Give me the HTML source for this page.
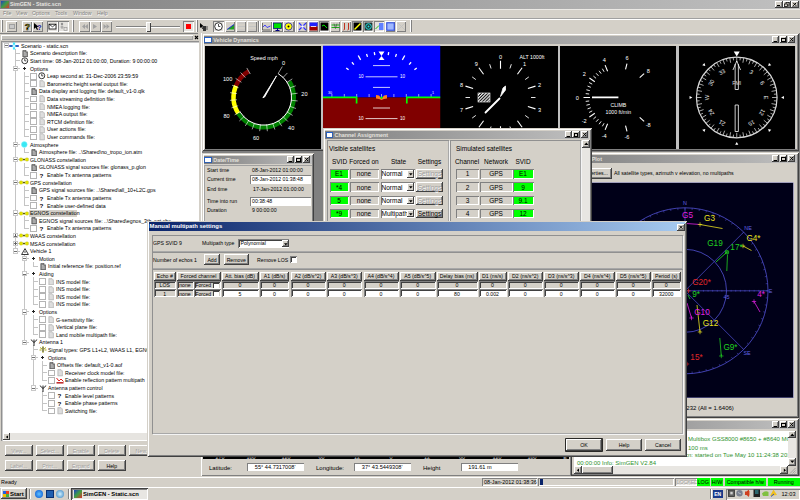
<!DOCTYPE html><html><head><meta charset="utf-8"><style>
html,body{margin:0;padding:0;width:800px;height:500px;overflow:hidden;background:#D4D0C8;}
body{position:relative;font-family:"Liberation Sans", sans-serif;}
div,span,svg{position:absolute;box-sizing:border-box;}
span{white-space:nowrap;line-height:1;}
</style></head><body>
<div style="left:0px;top:0px;width:800px;height:8.7px;background:linear-gradient(90deg,#808080,#C0C0C0)"></div>
<div style="left:1px;top:0.8px;width:7.5px;height:7.2px;background:linear-gradient(135deg,#2040c0,#40a040 50%,#e03030)"></div>
<span style="left:10px;top:2.49px;font-size:5.3px;color:#e6e4e0;font-weight:700;">SimGEN - Static.scn</span>
<div style="left:775px;top:1px;width:7.5px;height:6.8px;background:#D4D0C8;box-shadow:inset -1px -1px #404040,inset 1px 1px #fff,inset -2px -2px #808080;"></div>
<div style="left:783px;top:1px;width:7.5px;height:6.8px;background:#D4D0C8;box-shadow:inset -1px -1px #404040,inset 1px 1px #fff,inset -2px -2px #808080;"></div>
<div style="left:791px;top:1px;width:7.5px;height:6.8px;background:#D4D0C8;box-shadow:inset -1px -1px #404040,inset 1px 1px #fff,inset -2px -2px #808080;"></div>
<div style="left:777px;top:5.2px;width:3px;height:1px;background:#000"></div>
<svg style="position:absolute;left:783px;top:1px;" width="7.5" height="6.8" viewBox="0 0 7.5 6.8"><rect x="3" y="1.6" width="3" height="2.6" fill="none" stroke="#000" stroke-width="0.7"/><rect x="1.6" y="3" width="3" height="2.4" fill="#d4d0c8" stroke="#000" stroke-width="0.7"/></svg>
<svg style="position:absolute;left:791px;top:1px;" width="7.5" height="6.8" viewBox="0 0 7.5 6.8"><path d="M2.2 1.8L5.2 4.8M5.2 1.8L2.2 4.8" stroke="#000" stroke-width="1"/></svg>
<span style="left:3px;top:11.32px;font-size:5.2px;color:#808080;font-weight:400;text-shadow:0.5px 0.5px #fff">File</span>
<span style="left:16px;top:11.32px;font-size:5.2px;color:#808080;font-weight:400;text-shadow:0.5px 0.5px #fff">View</span>
<span style="left:32px;top:11.32px;font-size:5.2px;color:#808080;font-weight:400;text-shadow:0.5px 0.5px #fff">Options</span>
<span style="left:55px;top:11.32px;font-size:5.2px;color:#808080;font-weight:400;text-shadow:0.5px 0.5px #fff">Tools</span>
<span style="left:73px;top:11.32px;font-size:5.2px;color:#808080;font-weight:400;text-shadow:0.5px 0.5px #fff">Window</span>
<span style="left:97px;top:11.32px;font-size:5.2px;color:#808080;font-weight:400;text-shadow:0.5px 0.5px #fff">Help</span>
<div style="left:0px;top:8.7px;width:800px;height:1px;background:#ebe9e5"></div>
<div style="left:0px;top:33px;width:200px;height:1px;background:#808080"></div>
<div style="left:0px;top:18px;width:800px;height:1px;background:#a0a0a0"></div>
<div style="left:0px;top:19px;width:800px;height:1px;background:#fff"></div>
<div style="left:0px;top:33px;width:800px;height:1px;background:#808080"></div>
<div style="left:0px;top:34px;width:800px;height:1px;background:#fff"></div>
<div style="left:1px;top:20px;width:1px;height:12px;background:#fff"></div>
<div style="left:2px;top:20px;width:1px;height:12px;background:#808080"></div>
<div style="left:72px;top:20px;width:1px;height:12px;background:#fff"></div>
<div style="left:73px;top:20px;width:1px;height:12px;background:#808080"></div>
<div style="left:196px;top:20px;width:1px;height:12px;background:#fff"></div>
<div style="left:197px;top:20px;width:1px;height:12px;background:#808080"></div>
<div style="left:410px;top:20px;width:1px;height:12px;background:#fff"></div>
<div style="left:411px;top:20px;width:1px;height:12px;background:#808080"></div>
<div style="left:6px;top:21px;width:10.5px;height:10.5px;box-shadow:inset 1px 1px #fff,inset -1px -1px #808080"></div>
<div style="left:8.5px;top:23.5px;width:6px;height:5px;background:#c8c8c8;border:0.6px solid #a0a0a0"></div>
<div style="left:21.5px;top:21px;width:10.5px;height:10.5px;box-shadow:inset 1px 1px #fff,inset -1px -1px #808080"></div>
<svg style="position:absolute;left:21.5px;top:21px;" width="11" height="11" viewBox="0 0 11 11"><text x="5.5" y="8.8" font-size="9" font-weight="700" text-anchor="middle" fill="#c8b800" stroke="#000" stroke-width="0.5" font-family="Liberation Sans">?</text></svg>
<div style="left:32px;top:21px;width:10.5px;height:10.5px;box-shadow:inset 1px 1px #fff,inset -1px -1px #808080"></div>
<svg style="position:absolute;left:33px;top:22px;" width="9" height="9" viewBox="0 0 9 9"><path d="M1 1L1 7L2.6 5.6L4 8L5 7.5L3.8 5.1L6 5Z" fill="#000"/></svg>
<span style="left:37.2px;top:23.64px;font-size:7px;color:#1010a0;font-weight:700;">?</span>
<div style="left:47px;top:21px;width:10.5px;height:10.5px;background:#e4e2de;box-shadow:inset 1px 1px #808080,inset -1px -1px #fff"></div>
<svg style="position:absolute;left:47px;top:21px;" width="11" height="11" viewBox="0 0 11 11"><rect x="2" y="3.2" width="7" height="4.8" fill="#fff" stroke="#000" stroke-width="0.8"/><path d="M2 3.2L5.5 5.8L9 3.2" stroke="#000" stroke-width="0.7" fill="none"/></svg>
<div style="left:58px;top:21px;width:10.5px;height:10.5px;background:#e4e2de;box-shadow:inset 1px 1px #808080,inset -1px -1px #fff"></div>
<svg style="position:absolute;left:58px;top:21px;" width="11" height="11" viewBox="0 0 11 11"><circle cx="4" cy="3" r="1.2" fill="#909090"/><path d="M4 4.5V8M2.5 6H5.5" stroke="#909090" stroke-width="0.8"/><rect x="6" y="6.5" width="3" height="3" fill="none" stroke="#909090" stroke-width="0.6"/></svg>
<div style="left:79px;top:21px;width:10.5px;height:10.5px;box-shadow:inset 1px 1px #fff,inset -1px -1px #808080"></div>
<div style="left:90px;top:21px;width:10.5px;height:10.5px;box-shadow:inset 1px 1px #fff,inset -1px -1px #808080"></div>
<div style="left:101px;top:21px;width:10.5px;height:10.5px;box-shadow:inset 1px 1px #fff,inset -1px -1px #808080"></div>
<svg style="position:absolute;left:79px;top:21px;" width="33" height="11" viewBox="0 0 33 11"><path d="M6 3L3 5.5L6 8ZM9 3L6 5.5L9 8Z" fill="#a0a0a0"/><path d="M14 3V8L18 5.5Z" fill="#a0a0a0"/><path d="M24.5 3L27.5 5.5L24.5 8ZM27.5 3L30.5 5.5L27.5 8Z" fill="#a0a0a0"/></svg>
<div style="left:115.5px;top:25.5px;width:64px;height:1px;background:#808080"></div>
<div style="left:115.5px;top:26.5px;width:64px;height:1px;background:#fff"></div>
<div style="left:146px;top:22px;width:4.5px;height:9.5px;background:#e8e6e2;box-shadow:inset 1px 1px #fff,inset -1px -1px #404040"></div>
<div style="left:183px;top:21px;width:10.5px;height:10.5px;background:#e4e2de;box-shadow:inset 1px 1px #808080,inset -1px -1px #fff"></div>
<div style="left:186px;top:23.8px;width:5px;height:4.8px;background:#ff0000"></div>
<div style="left:200px;top:22px;width:7px;height:9px;"></div>
<svg style="position:absolute;left:199px;top:22px;" width="10" height="10" viewBox="0 0 10 10"><path d="M1 1L1 6L2.3 5L3.3 7L4 6.7L3.1 4.6L5 4.5Z" fill="#000"/><rect x="4" y="4" width="3" height="5" fill="#333"/><path d="M7 5H9M7 7H9" stroke="#333" stroke-width="0.8"/></svg>
<div style="left:213px;top:21px;width:10.5px;height:10.5px;background:#e4e2de;box-shadow:inset 1px 1px #808080,inset -1px -1px #fff"></div>
<svg style="position:absolute;left:213px;top:21px;" width="11" height="11" viewBox="0 0 11 11"><circle cx="5.5" cy="5.5" r="3.8" fill="#fff" stroke="#000" stroke-width="0.8"/><path d="M5.5 3V5.5H7.3" stroke="#000" stroke-width="0.7" fill="none"/></svg>
<div style="left:224.5px;top:21px;width:10.5px;height:10.5px;box-shadow:inset 1px 1px #fff,inset -1px -1px #808080"></div>
<svg style="position:absolute;left:224.5px;top:21px;" width="11" height="11" viewBox="0 0 11 11"><path d="M2 8.5L9 3.5V8.5Z" fill="#20a020"/><path d="M2 8.5L9 3.5" stroke="#2020e0" stroke-width="0.9"/></svg>
<div style="left:235.5px;top:21px;width:10.5px;height:10.5px;box-shadow:inset 1px 1px #fff,inset -1px -1px #808080"></div>
<svg style="position:absolute;left:235.5px;top:21px;" width="11" height="11" viewBox="0 0 11 11"><path d="M2 2H9M2 5.5H9M2 9H9" stroke="#c0c0c0" stroke-width="0.8"/></svg>
<div style="left:246.5px;top:21px;width:10.5px;height:10.5px;box-shadow:inset 1px 1px #fff,inset -1px -1px #808080"></div>
<svg style="position:absolute;left:246.5px;top:21px;" width="11" height="11" viewBox="0 0 11 11"><path d="M2 2H9M2 5.5H9M2 9H9" stroke="#c0c0c0" stroke-width="0.8"/></svg>
<div style="left:257.5px;top:21px;width:1px;height:11px;background:#808080"></div>
<div style="left:258.5px;top:21px;width:1px;height:11px;background:#fff"></div>
<div style="left:261px;top:21px;width:10.5px;height:10.5px;box-shadow:inset 1px 1px #fff,inset -1px -1px #808080"></div>
<svg style="position:absolute;left:261px;top:21px;" width="11" height="11" viewBox="0 0 11 11"><path d="M1.5 2V9H9.5" stroke="#404040" stroke-width="0.7" fill="none"/><path d="M2 6L4 4L6 6.5L9.5 5" stroke="#2020ff" stroke-width="0.8" fill="none"/></svg>
<div style="left:272px;top:21px;width:10.5px;height:10.5px;box-shadow:inset 1px 1px #fff,inset -1px -1px #808080"></div>
<svg style="position:absolute;left:272px;top:21px;" width="11" height="11" viewBox="0 0 11 11"><rect x="1.5" y="2" width="8" height="5.5" fill="#00e000" stroke="#000080" stroke-width="0.7"/><path d="M3.5 9.5H7.5M5.5 7.5V9.5" stroke="#000080" stroke-width="1"/></svg>
<div style="left:283px;top:21px;width:10.5px;height:10.5px;box-shadow:inset 1px 1px #fff,inset -1px -1px #808080"></div>
<svg style="position:absolute;left:283px;top:21px;" width="11" height="11" viewBox="0 0 11 11"><circle cx="5.5" cy="5.5" r="3.6" fill="#ffff00" stroke="#0000c0" stroke-width="0.7"/><circle cx="5.5" cy="5.5" r="1" fill="#000"/></svg>
<div style="left:294px;top:21px;width:1px;height:11px;background:#808080"></div>
<div style="left:295px;top:21px;width:1px;height:11px;background:#fff"></div>
<div style="left:296.5px;top:21px;width:10.5px;height:10.5px;box-shadow:inset 1px 1px #fff,inset -1px -1px #808080"></div>
<svg style="position:absolute;left:296.5px;top:21px;" width="11" height="11" viewBox="0 0 11 11"><path d="M2 2L9 9M9 2L2 9" stroke="#3030ff" stroke-width="1.1"/><circle cx="5.5" cy="5.5" r="1.3" fill="#fff"/></svg>
<div style="left:307.5px;top:21px;width:10.5px;height:10.5px;box-shadow:inset 1px 1px #fff,inset -1px -1px #808080"></div>
<svg style="position:absolute;left:307.5px;top:21px;" width="11" height="11" viewBox="0 0 11 11"><rect x="1.5" y="1.5" width="8" height="4" fill="#2020ff"/><rect x="1.5" y="5.5" width="8" height="4" fill="#a00000"/><path d="M3 5.5H8" stroke="#fff" stroke-width="0.8"/></svg>
<div style="left:318.5px;top:21px;width:10.5px;height:10.5px;background:#e4e2de;box-shadow:inset 1px 1px #808080,inset -1px -1px #fff"></div>
<svg style="position:absolute;left:318.5px;top:21px;" width="11" height="11" viewBox="0 0 11 11"><rect x="1.5" y="1.5" width="8" height="8" fill="#000"/><path d="M3 5L5 4L8 7" stroke="#00ff00" stroke-width="0.9" fill="none"/></svg>
<div style="left:329.5px;top:21px;width:10.5px;height:10.5px;box-shadow:inset 1px 1px #fff,inset -1px -1px #808080"></div>
<svg style="position:absolute;left:329.5px;top:21px;" width="11" height="11" viewBox="0 0 11 11"><path d="M1.5 4H9.5M1.5 6.5H9.5" stroke="#00b000" stroke-width="0.9"/><path d="M4 2.5L5.5 7.5L7 2.5" stroke="#404040" stroke-width="0.6" fill="none"/></svg>
<div style="left:340.5px;top:21px;width:10.5px;height:10.5px;box-shadow:inset 1px 1px #fff,inset -1px -1px #808080"></div>
<svg style="position:absolute;left:340.5px;top:21px;" width="11" height="11" viewBox="0 0 11 11"><path d="M3.5 2V8.5L2.5 9M7.5 2V8.5L6.5 9" stroke="#c03020" stroke-width="1" fill="none"/></svg>
<div style="left:351.5px;top:21px;width:10.5px;height:10.5px;background:#e4e2de;box-shadow:inset 1px 1px #808080,inset -1px -1px #fff"></div>
<svg style="position:absolute;left:351.5px;top:21px;" width="11" height="11" viewBox="0 0 11 11"><rect x="1.5" y="1.5" width="8" height="8" fill="#000"/><path d="M2.5 8.5L8.5 2.5" stroke="#ffff00" stroke-width="1.5"/></svg>
<div style="left:362.5px;top:21px;width:10.5px;height:10.5px;background:#e4e2de;box-shadow:inset 1px 1px #808080,inset -1px -1px #fff"></div>
<svg style="position:absolute;left:362.5px;top:21px;" width="11" height="11" viewBox="0 0 11 11"><rect x="1.5" y="1.5" width="8" height="8" fill="#203030"/><circle cx="5.5" cy="5.5" r="2.8" fill="none" stroke="#20e0e0" stroke-width="1"/><circle cx="5.5" cy="5.5" r="1" fill="#20e0e0"/></svg>
<div style="left:373.5px;top:21px;width:10.5px;height:10.5px;background:#e4e2de;box-shadow:inset 1px 1px #808080,inset -1px -1px #fff"></div>
<svg style="position:absolute;left:373.5px;top:21px;" width="11" height="11" viewBox="0 0 11 11"><rect x="5" y="2" width="4.5" height="7" fill="#6080ff"/><path d="M1.5 8L5 4.5" stroke="#20c020" stroke-width="1"/></svg>
<div style="left:384.5px;top:21px;width:10.5px;height:10.5px;box-shadow:inset 1px 1px #fff,inset -1px -1px #808080"></div>
<svg style="position:absolute;left:384.5px;top:21px;" width="11" height="11" viewBox="0 0 11 11"><rect x="1.8" y="1.8" width="7.4" height="7.4" fill="#a0b8ff" stroke="#2040e0" stroke-width="1"/></svg>
<div style="left:395.5px;top:21px;width:10.5px;height:10.5px;box-shadow:inset 1px 1px #fff,inset -1px -1px #808080"></div>
<svg style="position:absolute;left:395.5px;top:21px;" width="11" height="11" viewBox="0 0 11 11"><path d="M2 2L9 9M9 2L2 9" stroke="#c0c0c0" stroke-width="0.8"/></svg>
<div style="left:200px;top:33px;width:600px;height:444px;background:#808080"></div>
<div style="left:198px;top:33px;width:4px;height:444px;background:#D4D0C8"></div>
<div style="left:200.5px;top:33px;width:1px;height:444px;background:#fff"></div>
<div style="left:202px;top:33px;width:597px;height:118px;background:#D4D0C8;box-shadow:inset 1px 1px #D4D0C8,inset -1px -1px #404040,inset 2px 2px #fff,inset -2px -2px #808080"></div>
<div style="left:204px;top:35.5px;width:592.5px;height:8.5px;background:linear-gradient(90deg,#808080,#C0C0C0)"></div>
<div style="left:204.3px;top:36.5px;width:7.6px;height:6.5px;background:#fff;border:0.7px solid #3060b0;border-top:1.3px solid #2060d0;box-sizing:border-box"></div>
<span style="left:213.3px;top:37.70px;font-size:5.4px;color:#e4e2de;font-weight:700;">Vehicle Dynamics</span>
<div style="left:771.9px;top:36.1px;width:7.4px;height:7.3px;background:#D4D0C8;box-shadow:inset -1px -1px #404040,inset 1px 1px #fff,inset -2px -2px #808080;"></div>
<div style="left:773.9px;top:40.6px;width:3px;height:1px;background:#000"></div>
<div style="left:779.6px;top:36.1px;width:7.4px;height:7.3px;background:#D4D0C8;box-shadow:inset -1px -1px #404040,inset 1px 1px #fff,inset -2px -2px #808080;"></div>
<div style="left:781.4px;top:37.5px;width:4.2px;height:4.3px;border:0.8px solid #000;border-top-width:1.4px;box-sizing:border-box"></div>
<div style="left:787.9px;top:36.1px;width:7.4px;height:7.3px;background:#D4D0C8;box-shadow:inset -1px -1px #404040,inset 1px 1px #fff,inset -2px -2px #808080;"></div>
<svg style="position:absolute;left:787.9px;top:36.1px;" width="7.7" height="7.3" viewBox="0 0 7.7 7.3"><path d="M2.2 1.8L5.1 5.1M5.1 1.8L2.2 5.1" stroke="#000" stroke-width="1"/></svg>
<div style="left:205px;top:45.5px;width:591px;height:103px;background:#c0c0c0"></div>
<div style="left:205px;top:45.5px;width:116px;height:103px;background:#000"></div>
<div style="left:323px;top:45.5px;width:117.5px;height:103px;background:#000"></div>
<div style="left:441px;top:45.5px;width:117px;height:103px;background:#000"></div>
<div style="left:559.5px;top:45.5px;width:116.5px;height:103px;background:#000"></div>
<div style="left:678.5px;top:45.5px;width:116.5px;height:103px;background:#000"></div>
<svg style="position:absolute;left:0px;top:0px;clip-path:inset(45.5px 479px 351.5px 205px)" width="800" height="500" viewBox="0 0 800 500"><path d="M289.41 81.40A30.2 30.2 0 0 1 238.19 113.40" stroke="#008000" stroke-width="4.4" fill="none"/><path d="M238.19 113.40A30.2 30.2 0 0 1 236.00 85.60" stroke="#ffff00" stroke-width="4.4" fill="none"/><path d="M236.00 85.60A30.2 30.2 0 0 1 248.70 71.25" stroke="#800000" stroke-width="4.4" fill="none"/><path d="M278.12 73.57A27.8 27.8 0 1 1 240.22 112.13" stroke="#fff" stroke-width="1" fill="none"/><path d="M278.22 73.40L282.34 66.54" stroke="#fff" stroke-width="0.6"/><path d="M282.56 77.98L287.42 72.94" stroke="#fff" stroke-width="0.6"/><path d="M286.44 82.69L292.31 78.88" stroke="#fff" stroke-width="0.6"/><path d="M289.17 88.17L295.75 85.77" stroke="#fff" stroke-width="0.6"/><path d="M290.60 94.11L297.55 93.26" stroke="#fff" stroke-width="0.6"/><path d="M290.65 100.22L297.61 100.95" stroke="#fff" stroke-width="0.6"/><path d="M289.33 106.19L295.95 108.47" stroke="#fff" stroke-width="0.6"/><path d="M286.70 111.71L292.63 115.42" stroke="#fff" stroke-width="0.6"/><path d="M282.89 116.49L287.84 121.44" stroke="#fff" stroke-width="0.6"/><path d="M278.11 120.30L281.82 126.23" stroke="#fff" stroke-width="0.6"/><path d="M272.59 122.93L274.87 129.55" stroke="#fff" stroke-width="0.6"/><path d="M266.62 124.25L267.35 131.21" stroke="#fff" stroke-width="0.6"/><path d="M260.51 124.20L259.66 131.15" stroke="#fff" stroke-width="0.6"/><path d="M254.57 122.77L252.17 129.35" stroke="#fff" stroke-width="0.6"/><path d="M249.09 120.04L245.28 125.91" stroke="#fff" stroke-width="0.6"/><path d="M244.38 116.16L239.34 121.02" stroke="#fff" stroke-width="0.6"/><path d="M240.66 111.31L234.66 114.91" stroke="#fff" stroke-width="0.6"/><path d="M238.12 105.74L231.46 107.91" stroke="#fff" stroke-width="0.6"/><path d="M236.90 99.75L229.93 100.36" stroke="#fff" stroke-width="0.6"/><path d="M237.06 93.64L230.13 92.67" stroke="#fff" stroke-width="0.6"/><path d="M238.59 87.72L232.06 85.22" stroke="#fff" stroke-width="0.6"/><path d="M241.42 82.30L235.61 78.39" stroke="#fff" stroke-width="0.6"/><path d="M245.39 77.65L240.61 72.53" stroke="#fff" stroke-width="0.6"/><path d="M250.30 74.02L246.80 67.96" stroke="#fff" stroke-width="0.6"/><text x="264.00" y="59.54" font-size="5.4" fill="#fff" text-anchor="middle" font-family="Liberation Sans" >Speed mph</text><text x="283.50" y="65.02" font-size="5.6" fill="#fff" text-anchor="middle" font-family="Liberation Sans" >0</text><text x="304.40" y="96.02" font-size="5.6" fill="#fff" text-anchor="middle" font-family="Liberation Sans" >20</text><text x="291.20" y="129.82" font-size="5.6" fill="#fff" text-anchor="middle" font-family="Liberation Sans" >40</text><text x="256.00" y="140.22" font-size="5.6" fill="#fff" text-anchor="middle" font-family="Liberation Sans" >60</text><text x="226.60" y="117.52" font-size="5.6" fill="#fff" text-anchor="middle" font-family="Liberation Sans" >80</text><text x="227.60" y="80.52" font-size="5.6" fill="#fff" text-anchor="middle" font-family="Liberation Sans" >100</text><path d="M262.90 97.80L276.49 75.86L264.70 96.90Z" fill="#fff" stroke="#fff" stroke-width="0.9" stroke-linejoin="round"/></svg>
<svg style="position:absolute;left:0px;top:0px;clip-path:inset(45.5px 359.5px 351.5px 323px)" width="800" height="500" viewBox="0 0 800 500"><rect x="323" y="45.5" width="117.5" height="52" fill="#0000ff"/><rect x="323" y="97.5" width="117.5" height="51" fill="#800000"/><path d="M373 65.6H390" stroke="#fff" stroke-width="0.8"/><path d="M365.5 76.8H397.5" stroke="#fff" stroke-width="0.8"/><text x="361.00" y="78.46" font-size="4.6" fill="#fff" text-anchor="middle" font-family="Liberation Sans" >10</text><text x="402.50" y="78.46" font-size="4.6" fill="#fff" text-anchor="middle" font-family="Liberation Sans" >10</text><path d="M373 87.4H390" stroke="#fff" stroke-width="0.8"/><path d="M373 108H390" stroke="#fff" stroke-width="0.8"/><path d="M365.5 118.6H397.5" stroke="#fff" stroke-width="0.8"/><text x="361.00" y="120.26" font-size="4.6" fill="#fff" text-anchor="middle" font-family="Liberation Sans" >10</text><text x="402.50" y="120.26" font-size="4.6" fill="#fff" text-anchor="middle" font-family="Liberation Sans" >10</text><path d="M388.23 55.03L388.70 52.07" stroke="#fff" stroke-width="1.3"/><path d="M374.77 55.03L374.30 52.07" stroke="#fff" stroke-width="1.3"/><path d="M395.50 56.84L396.48 54.01" stroke="#fff" stroke-width="1.3"/><path d="M367.50 56.84L366.52 54.01" stroke="#fff" stroke-width="1.3"/><path d="M402.35 59.89L404.77 55.52" stroke="#fff" stroke-width="1.3"/><path d="M360.65 59.89L358.23 55.52" stroke="#fff" stroke-width="1.3"/><path d="M409.14 64.56L411.07 62.26" stroke="#fff" stroke-width="1.3"/><path d="M353.86 64.56L351.93 62.26" stroke="#fff" stroke-width="1.3"/><path d="M414.44 69.86L416.74 67.93" stroke="#fff" stroke-width="1.3"/><path d="M348.56 69.86L346.26 67.93" stroke="#fff" stroke-width="1.3"/><path d="M378.5 51.5H384.5L381.5 56L384.5 60H378.5L381.5 56Z" fill="#fff"/><path d="M331.90 94V97" stroke="#fff" stroke-width="0.6"/><path d="M344.30 94V97" stroke="#fff" stroke-width="0.6"/><path d="M356.70 94V97" stroke="#fff" stroke-width="0.6"/><path d="M369.10 94V97" stroke="#fff" stroke-width="0.6"/><path d="M381.50 94V97" stroke="#fff" stroke-width="0.6"/><path d="M393.90 94V97" stroke="#fff" stroke-width="0.6"/><path d="M406.30 94V97" stroke="#fff" stroke-width="0.6"/><path d="M418.70 94V97" stroke="#fff" stroke-width="0.6"/><path d="M431.10 94V97" stroke="#fff" stroke-width="0.6"/><text x="330.00" y="93.50" font-size="3.6" fill="#fff" text-anchor="middle" font-family="Liberation Sans" >30</text><text x="433.00" y="93.50" font-size="3.6" fill="#fff" text-anchor="middle" font-family="Liberation Sans" >1</text><path d="M323 97.3H356.6V103.5" stroke="#00ff00" stroke-width="1.7" fill="none"/><path d="M440.5 97.3H406.8V103.5" stroke="#00ff00" stroke-width="1.7" fill="none"/><path d="M376 95L379 95.5L381.5 98.5L384 95.5L387 95V98.5L384 99L381.5 100L379 99L376 98.5Z" fill="#ff8020"/><circle cx="381.5" cy="97.6" r="1.2" fill="#00ff00"/></svg>
<svg style="position:absolute;left:0px;top:0px;clip-path:inset(45.5px 242px 351.5px 441px)" width="800" height="500" viewBox="0 0 800 500"><path d="M500.50 68.70L500.50 60.70" stroke="#fff" stroke-width="1.1"/><path d="M509.93 68.49L511.32 64.21" stroke="#fff" stroke-width="0.9"/><path d="M517.43 74.20L522.13 67.73" stroke="#fff" stroke-width="1.1"/><path d="M525.18 79.57L528.82 76.93" stroke="#fff" stroke-width="0.9"/><path d="M527.89 88.60L535.50 86.13" stroke="#fff" stroke-width="1.1"/><path d="M531.00 97.50L535.50 97.50" stroke="#fff" stroke-width="0.9"/><path d="M527.89 106.40L535.50 108.87" stroke="#fff" stroke-width="1.1"/><path d="M525.18 115.43L528.82 118.07" stroke="#fff" stroke-width="0.9"/><path d="M517.43 120.80L522.13 127.27" stroke="#fff" stroke-width="1.1"/><path d="M509.93 126.51L511.32 130.79" stroke="#fff" stroke-width="0.9"/><path d="M500.50 126.30L500.50 134.30" stroke="#fff" stroke-width="1.1"/><path d="M491.07 126.51L489.68 130.79" stroke="#fff" stroke-width="0.9"/><path d="M483.57 120.80L478.87 127.27" stroke="#fff" stroke-width="1.1"/><path d="M475.82 115.43L472.18 118.07" stroke="#fff" stroke-width="0.9"/><path d="M473.11 106.40L465.50 108.87" stroke="#fff" stroke-width="1.1"/><path d="M470.00 97.50L465.50 97.50" stroke="#fff" stroke-width="0.9"/><path d="M473.11 88.60L465.50 86.13" stroke="#fff" stroke-width="1.1"/><path d="M475.82 79.57L472.18 76.93" stroke="#fff" stroke-width="0.9"/><path d="M483.57 74.20L478.87 67.73" stroke="#fff" stroke-width="1.1"/><path d="M491.07 68.49L489.68 64.21" stroke="#fff" stroke-width="0.9"/><text x="500.50" y="58.52" font-size="5.6" fill="#fff" text-anchor="middle" font-family="Liberation Sans" >0</text><text x="524.60" y="66.35" font-size="5.6" fill="#fff" text-anchor="middle" font-family="Liberation Sans" >1</text><text x="539.49" y="86.85" font-size="5.6" fill="#fff" text-anchor="middle" font-family="Liberation Sans" >2</text><text x="539.49" y="112.19" font-size="5.6" fill="#fff" text-anchor="middle" font-family="Liberation Sans" >3</text><text x="524.60" y="132.69" font-size="5.6" fill="#fff" text-anchor="middle" font-family="Liberation Sans" >4</text><text x="500.50" y="140.52" font-size="5.6" fill="#fff" text-anchor="middle" font-family="Liberation Sans" >5</text><text x="476.40" y="132.69" font-size="5.6" fill="#fff" text-anchor="middle" font-family="Liberation Sans" >6</text><text x="461.51" y="112.19" font-size="5.6" fill="#fff" text-anchor="middle" font-family="Liberation Sans" >7</text><text x="461.51" y="86.85" font-size="5.6" fill="#fff" text-anchor="middle" font-family="Liberation Sans" >8</text><text x="476.40" y="66.35" font-size="5.6" fill="#fff" text-anchor="middle" font-family="Liberation Sans" >9</text><text x="532.00" y="59.37" font-size="5.2" fill="#fff" text-anchor="middle" font-family="Liberation Sans" >ALT 1000ft</text><defs><pattern id="hp" width="2.2" height="2.2" patternUnits="userSpaceOnUse" patternTransform="rotate(45)"><rect width="1.1" height="2.2" fill="#fff"/></pattern></defs><rect x="478" y="93" width="12" height="9" fill="url(#hp)" stroke="#fff" stroke-width="0.6"/><path d="M485.5 112.5L499.5 98.5" stroke="#fff" stroke-width="1.8" stroke-linecap="round"/><path d="M500.5 96.5L503 88L505.5 86L505.5 90Z" fill="#fff" stroke="#fff" stroke-width="0.8" stroke-linejoin="round"/></svg>
<svg style="position:absolute;left:0px;top:0px;clip-path:inset(45.5px 124px 351.5px 559.5px)" width="800" height="500" viewBox="0 0 800 500"><path d="M607.59 123.83L605.11 129.84" stroke="#fff" stroke-width="1.1"/><path d="M604.09 123.24L602.38 126.29" stroke="#fff" stroke-width="0.9"/><path d="M601.16 121.37L599.10 124.20" stroke="#fff" stroke-width="0.9"/><path d="M598.48 119.16L596.10 121.73" stroke="#fff" stroke-width="0.9"/><path d="M596.07 116.66L593.41 118.93" stroke="#fff" stroke-width="0.9"/><path d="M594.80 113.33L589.40 116.94" stroke="#fff" stroke-width="1.1"/><path d="M592.22 110.89L589.10 112.48" stroke="#fff" stroke-width="0.9"/><path d="M590.82 107.71L587.54 108.92" stroke="#fff" stroke-width="0.9"/><path d="M589.82 104.39L586.41 105.20" stroke="#fff" stroke-width="0.9"/><path d="M589.20 100.97L585.73 101.38" stroke="#fff" stroke-width="0.9"/><path d="M590.00 97.50L583.50 97.50" stroke="#fff" stroke-width="1.1"/><path d="M589.20 94.03L585.73 93.62" stroke="#fff" stroke-width="0.9"/><path d="M589.82 90.61L586.41 89.80" stroke="#fff" stroke-width="0.9"/><path d="M590.82 87.29L587.54 86.08" stroke="#fff" stroke-width="0.9"/><path d="M592.22 84.11L589.10 82.52" stroke="#fff" stroke-width="0.9"/><path d="M594.80 81.67L589.40 78.06" stroke="#fff" stroke-width="1.1"/><path d="M596.07 78.34L593.41 76.07" stroke="#fff" stroke-width="0.9"/><path d="M598.48 75.84L596.10 73.27" stroke="#fff" stroke-width="0.9"/><path d="M601.16 73.63L599.10 70.80" stroke="#fff" stroke-width="0.9"/><path d="M604.09 71.76L602.38 68.71" stroke="#fff" stroke-width="0.9"/><path d="M607.59 71.17L605.11 65.16" stroke="#fff" stroke-width="1.1"/><path d="M625.52 69.36L626.97 63.54" stroke="#fff" stroke-width="1.1"/><path d="M639.71 77.72L644.10 73.63" stroke="#fff" stroke-width="1.1"/><path d="M639.71 117.28L644.10 121.37" stroke="#fff" stroke-width="1.1"/><path d="M625.52 125.64L626.97 131.46" stroke="#fff" stroke-width="1.1"/><text x="577.20" y="99.52" font-size="5.6" fill="#fff" text-anchor="middle" font-family="Liberation Sans" >0</text><text x="584.20" y="76.32" font-size="5.6" fill="#fff" text-anchor="middle" font-family="Liberation Sans" >2</text><text x="604.20" y="61.52" font-size="5.6" fill="#fff" text-anchor="middle" font-family="Liberation Sans" >4</text><text x="627.00" y="59.62" font-size="5.6" fill="#fff" text-anchor="middle" font-family="Liberation Sans" >6</text><text x="648.20" y="72.52" font-size="5.6" fill="#fff" text-anchor="middle" font-family="Liberation Sans" >8</text><text x="584.20" y="122.72" font-size="5.6" fill="#fff" text-anchor="middle" font-family="Liberation Sans" >-2</text><text x="604.20" y="137.52" font-size="5.6" fill="#fff" text-anchor="middle" font-family="Liberation Sans" >-4</text><text x="627.00" y="139.42" font-size="5.6" fill="#fff" text-anchor="middle" font-family="Liberation Sans" >-6</text><text x="648.20" y="126.52" font-size="5.6" fill="#fff" text-anchor="middle" font-family="Liberation Sans" >-8</text><text x="618.40" y="107.47" font-size="5.2" fill="#fff" text-anchor="middle" font-family="Liberation Sans" >CLIMB</text><text x="618.40" y="114.07" font-size="5.2" fill="#fff" text-anchor="middle" font-family="Liberation Sans" >1000 ft/min</text><path d="M592 97.4H618.4" stroke="#fff" stroke-width="1.6"/></svg>
<svg style="position:absolute;left:0px;top:0px;clip-path:inset(45.5px 5px 351.5px 678.5px)" width="800" height="500" viewBox="0 0 800 500"><circle cx="736.75" cy="97.5" r="40.3" stroke="#d8d8d8" stroke-width="1.2" fill="none"/><path d="M736.75 57.20L736.75 62.20" stroke="#d0d0d0" stroke-width="0.8"/><path d="M740.26 57.35L740.00 60.34" stroke="#d0d0d0" stroke-width="0.8"/><path d="M743.75 57.81L742.88 62.74" stroke="#d0d0d0" stroke-width="0.8"/><path d="M747.18 58.57L746.40 61.47" stroke="#d0d0d0" stroke-width="0.8"/><path d="M750.53 59.63L748.82 64.33" stroke="#d0d0d0" stroke-width="0.8"/><path d="M753.78 60.98L752.51 63.69" stroke="#d0d0d0" stroke-width="0.8"/><path d="M756.90 62.60L754.40 66.93" stroke="#d0d0d0" stroke-width="0.8"/><path d="M759.87 64.49L758.14 66.95" stroke="#d0d0d0" stroke-width="0.8"/><path d="M762.65 66.63L759.44 70.46" stroke="#d0d0d0" stroke-width="0.8"/><path d="M765.25 69.00L763.13 71.12" stroke="#d0d0d0" stroke-width="0.8"/><path d="M767.62 71.60L763.79 74.81" stroke="#d0d0d0" stroke-width="0.8"/><path d="M769.76 74.38L767.30 76.11" stroke="#d0d0d0" stroke-width="0.8"/><path d="M771.65 77.35L767.32 79.85" stroke="#d0d0d0" stroke-width="0.8"/><path d="M773.27 80.47L770.56 81.74" stroke="#d0d0d0" stroke-width="0.8"/><path d="M774.62 83.72L769.92 85.43" stroke="#d0d0d0" stroke-width="0.8"/><path d="M775.68 87.07L772.78 87.85" stroke="#d0d0d0" stroke-width="0.8"/><path d="M776.44 90.50L771.51 91.37" stroke="#d0d0d0" stroke-width="0.8"/><path d="M776.90 93.99L773.91 94.25" stroke="#d0d0d0" stroke-width="0.8"/><path d="M777.05 97.50L772.05 97.50" stroke="#d0d0d0" stroke-width="0.8"/><path d="M776.90 101.01L773.91 100.75" stroke="#d0d0d0" stroke-width="0.8"/><path d="M776.44 104.50L771.51 103.63" stroke="#d0d0d0" stroke-width="0.8"/><path d="M775.68 107.93L772.78 107.15" stroke="#d0d0d0" stroke-width="0.8"/><path d="M774.62 111.28L769.92 109.57" stroke="#d0d0d0" stroke-width="0.8"/><path d="M773.27 114.53L770.56 113.26" stroke="#d0d0d0" stroke-width="0.8"/><path d="M771.65 117.65L767.32 115.15" stroke="#d0d0d0" stroke-width="0.8"/><path d="M769.76 120.62L767.30 118.89" stroke="#d0d0d0" stroke-width="0.8"/><path d="M767.62 123.40L763.79 120.19" stroke="#d0d0d0" stroke-width="0.8"/><path d="M765.25 126.00L763.13 123.88" stroke="#d0d0d0" stroke-width="0.8"/><path d="M762.65 128.37L759.44 124.54" stroke="#d0d0d0" stroke-width="0.8"/><path d="M759.87 130.51L758.14 128.05" stroke="#d0d0d0" stroke-width="0.8"/><path d="M756.90 132.40L754.40 128.07" stroke="#d0d0d0" stroke-width="0.8"/><path d="M753.78 134.02L752.51 131.31" stroke="#d0d0d0" stroke-width="0.8"/><path d="M750.53 135.37L748.82 130.67" stroke="#d0d0d0" stroke-width="0.8"/><path d="M747.18 136.43L746.40 133.53" stroke="#d0d0d0" stroke-width="0.8"/><path d="M743.75 137.19L742.88 132.26" stroke="#d0d0d0" stroke-width="0.8"/><path d="M740.26 137.65L740.00 134.66" stroke="#d0d0d0" stroke-width="0.8"/><path d="M736.75 137.80L736.75 132.80" stroke="#d0d0d0" stroke-width="0.8"/><path d="M733.24 137.65L733.50 134.66" stroke="#d0d0d0" stroke-width="0.8"/><path d="M729.75 137.19L730.62 132.26" stroke="#d0d0d0" stroke-width="0.8"/><path d="M726.32 136.43L727.10 133.53" stroke="#d0d0d0" stroke-width="0.8"/><path d="M722.97 135.37L724.68 130.67" stroke="#d0d0d0" stroke-width="0.8"/><path d="M719.72 134.02L720.99 131.31" stroke="#d0d0d0" stroke-width="0.8"/><path d="M716.60 132.40L719.10 128.07" stroke="#d0d0d0" stroke-width="0.8"/><path d="M713.63 130.51L715.36 128.05" stroke="#d0d0d0" stroke-width="0.8"/><path d="M710.85 128.37L714.06 124.54" stroke="#d0d0d0" stroke-width="0.8"/><path d="M708.25 126.00L710.37 123.88" stroke="#d0d0d0" stroke-width="0.8"/><path d="M705.88 123.40L709.71 120.19" stroke="#d0d0d0" stroke-width="0.8"/><path d="M703.74 120.62L706.20 118.89" stroke="#d0d0d0" stroke-width="0.8"/><path d="M701.85 117.65L706.18 115.15" stroke="#d0d0d0" stroke-width="0.8"/><path d="M700.23 114.53L702.94 113.26" stroke="#d0d0d0" stroke-width="0.8"/><path d="M698.88 111.28L703.58 109.57" stroke="#d0d0d0" stroke-width="0.8"/><path d="M697.82 107.93L700.72 107.15" stroke="#d0d0d0" stroke-width="0.8"/><path d="M697.06 104.50L701.99 103.63" stroke="#d0d0d0" stroke-width="0.8"/><path d="M696.60 101.01L699.59 100.75" stroke="#d0d0d0" stroke-width="0.8"/><path d="M696.45 97.50L701.45 97.50" stroke="#d0d0d0" stroke-width="0.8"/><path d="M696.60 93.99L699.59 94.25" stroke="#d0d0d0" stroke-width="0.8"/><path d="M697.06 90.50L701.99 91.37" stroke="#d0d0d0" stroke-width="0.8"/><path d="M697.82 87.07L700.72 87.85" stroke="#d0d0d0" stroke-width="0.8"/><path d="M698.88 83.72L703.58 85.43" stroke="#d0d0d0" stroke-width="0.8"/><path d="M700.23 80.47L702.94 81.74" stroke="#d0d0d0" stroke-width="0.8"/><path d="M701.85 77.35L706.18 79.85" stroke="#d0d0d0" stroke-width="0.8"/><path d="M703.74 74.38L706.20 76.11" stroke="#d0d0d0" stroke-width="0.8"/><path d="M705.88 71.60L709.71 74.81" stroke="#d0d0d0" stroke-width="0.8"/><path d="M708.25 69.00L710.37 71.12" stroke="#d0d0d0" stroke-width="0.8"/><path d="M710.85 66.63L714.06 70.46" stroke="#d0d0d0" stroke-width="0.8"/><path d="M713.63 64.49L715.36 66.95" stroke="#d0d0d0" stroke-width="0.8"/><path d="M716.60 62.60L719.10 66.93" stroke="#d0d0d0" stroke-width="0.8"/><path d="M719.72 60.98L720.99 63.69" stroke="#d0d0d0" stroke-width="0.8"/><path d="M722.97 59.63L724.68 64.33" stroke="#d0d0d0" stroke-width="0.8"/><path d="M726.32 58.57L727.10 61.47" stroke="#d0d0d0" stroke-width="0.8"/><path d="M729.75 57.81L730.62 62.74" stroke="#d0d0d0" stroke-width="0.8"/><path d="M733.24 57.35L733.50 60.34" stroke="#d0d0d0" stroke-width="0.8"/><text x="751.50" y="74.04" font-size="5.8" fill="#e8e8e8" text-anchor="middle" font-family="Liberation Sans" transform="rotate(30 751.50 71.95)">3</text><text x="762.30" y="84.84" font-size="5.8" fill="#e8e8e8" text-anchor="middle" font-family="Liberation Sans" transform="rotate(60 762.30 82.75)">6</text><text x="766.25" y="99.59" font-size="5.8" fill="#e8e8e8" text-anchor="middle" font-family="Liberation Sans" transform="rotate(90 766.25 97.50)">E</text><text x="762.30" y="114.34" font-size="5.8" fill="#e8e8e8" text-anchor="middle" font-family="Liberation Sans" transform="rotate(120 762.30 112.25)">12</text><text x="751.50" y="125.14" font-size="5.8" fill="#e8e8e8" text-anchor="middle" font-family="Liberation Sans" transform="rotate(150 751.50 123.05)">15</text><text x="722.00" y="125.14" font-size="5.8" fill="#e8e8e8" text-anchor="middle" font-family="Liberation Sans" transform="rotate(210 722.00 123.05)">21</text><text x="711.20" y="114.34" font-size="5.8" fill="#e8e8e8" text-anchor="middle" font-family="Liberation Sans" transform="rotate(240 711.20 112.25)">24</text><text x="707.25" y="99.59" font-size="5.8" fill="#e8e8e8" text-anchor="middle" font-family="Liberation Sans" transform="rotate(270 707.25 97.50)">W</text><text x="711.20" y="84.84" font-size="5.8" fill="#e8e8e8" text-anchor="middle" font-family="Liberation Sans" transform="rotate(300 711.20 82.75)">30</text><text x="722.00" y="74.04" font-size="5.8" fill="#e8e8e8" text-anchor="middle" font-family="Liberation Sans" transform="rotate(330 722.00 71.95)">33</text><path d="M767.68 63.77L770.88 63.77L769.28 66.57Z" fill="#fff" transform="rotate(45 769.28 64.97)"/><path d="M781.15 96.30L784.35 96.30L782.75 99.10Z" fill="#fff" transform="rotate(90 782.75 97.50)"/><path d="M767.68 128.83L770.88 128.83L769.28 131.63Z" fill="#fff" transform="rotate(135 769.28 130.03)"/><path d="M735.15 142.30L738.35 142.30L736.75 145.10Z" fill="#fff" transform="rotate(180 736.75 143.50)"/><path d="M702.62 128.83L705.82 128.83L704.22 131.63Z" fill="#fff" transform="rotate(225 704.22 130.03)"/><path d="M689.15 96.30L692.35 96.30L690.75 99.10Z" fill="#fff" transform="rotate(270 690.75 97.50)"/><path d="M702.62 63.77L705.82 63.77L704.22 66.57Z" fill="#fff" transform="rotate(315 704.22 64.97)"/><path d="M733.75 51.5H739.75L736.75 56.5Z" fill="#fff"/><path d="M735.15 64V89.5H738.35V64" stroke="#fff" stroke-width="0.8" fill="none"/><path d="M732.95 70L736.75 61L740.55 70" stroke="#fff" stroke-width="0.8" fill="none"/><path d="M735.15 105V131.5H738.35V105Z" stroke="#fff" stroke-width="0.8" fill="none"/><text x="736.75" y="85.37" font-size="5.2" fill="#d8d8d8" text-anchor="middle" font-family="Liberation Sans" >FMI</text></svg>
<div style="left:565.5px;top:152px;width:233.5px;height:266px;background:#D4D0C8;box-shadow:inset 1px 1px #D4D0C8,inset -1px -1px #404040,inset 2px 2px #fff,inset -2px -2px #808080"></div>
<div style="left:567.5px;top:154.5px;width:229.0px;height:8.5px;background:linear-gradient(90deg,#808080,#C0C0C0)"></div>
<div style="left:567.8px;top:155.5px;width:7.6px;height:6.5px;background:#fff;border:0.7px solid #3060b0;border-top:1.3px solid #2060d0;box-sizing:border-box"></div>
<span style="left:576.8px;top:156.70px;font-size:5.4px;color:#e4e2de;font-weight:700;">Polar Plot</span>
<div style="left:771.9px;top:155.1px;width:7.4px;height:7.3px;background:#D4D0C8;box-shadow:inset -1px -1px #404040,inset 1px 1px #fff,inset -2px -2px #808080;"></div>
<div style="left:773.9px;top:159.6px;width:3px;height:1px;background:#000"></div>
<div style="left:779.6px;top:155.1px;width:7.4px;height:7.3px;background:#D4D0C8;box-shadow:inset -1px -1px #404040,inset 1px 1px #fff,inset -2px -2px #808080;"></div>
<div style="left:781.4px;top:156.5px;width:4.2px;height:4.3px;border:0.8px solid #000;border-top-width:1.4px;box-sizing:border-box"></div>
<div style="left:787.9px;top:155.1px;width:7.4px;height:7.3px;background:#D4D0C8;box-shadow:inset -1px -1px #404040,inset 1px 1px #fff,inset -2px -2px #808080;"></div>
<svg style="position:absolute;left:787.9px;top:155.1px;" width="7.7" height="7.3" viewBox="0 0 7.7 7.3"><path d="M2.2 1.8L5.1 5.1M5.1 1.8L2.2 5.1" stroke="#000" stroke-width="1"/></svg>
<div style="left:578px;top:167.5px;width:34px;height:11.5px;background:#D4D0C8;box-shadow:inset -1px -1px #404040,inset 1px 1px #fff,inset -2px -2px #808080;"></div>
<span style="left:580px;top:171.22px;font-size:5.2px;color:#000;font-weight:400;">Properties...</span>
<span style="left:614px;top:171.22px;font-size:5.2px;color:#000;font-weight:400;">All satellite types, azimuth v elevation, no multipaths</span>
<svg style="position:absolute;left:0px;top:0px;clip-path:inset(182.5px 6.5px 102px 588px)" width="800" height="500" viewBox="0 0 800 500"><rect x="588" y="182.5" width="205.5" height="215.5" fill="#000018" stroke="#a0a0e8" stroke-width="0.8"/><circle cx="685" cy="290.8" r="83" fill="none" stroke="#4848c0" stroke-width="0.9"/><circle cx="685" cy="290.8" r="41.5" fill="none" stroke="#4848c0" stroke-width="0.9"/><path d="M685.00 207.80L685.00 209.80" stroke="#4848c0" stroke-width="0.6"/><path d="M692.23 208.12L692.06 210.11" stroke="#4848c0" stroke-width="0.6"/><path d="M699.41 209.06L699.07 211.03" stroke="#4848c0" stroke-width="0.6"/><path d="M706.48 210.63L705.96 212.56" stroke="#4848c0" stroke-width="0.6"/><path d="M713.39 212.81L712.70 214.68" stroke="#4848c0" stroke-width="0.6"/><path d="M720.08 215.58L719.23 217.39" stroke="#4848c0" stroke-width="0.6"/><path d="M726.50 218.92L725.50 220.65" stroke="#4848c0" stroke-width="0.6"/><path d="M732.61 222.81L731.46 224.45" stroke="#4848c0" stroke-width="0.6"/><path d="M738.35 227.22L737.07 228.75" stroke="#4848c0" stroke-width="0.6"/><path d="M743.69 232.11L742.28 233.52" stroke="#4848c0" stroke-width="0.6"/><path d="M748.58 237.45L747.05 238.73" stroke="#4848c0" stroke-width="0.6"/><path d="M752.99 243.19L751.35 244.34" stroke="#4848c0" stroke-width="0.6"/><path d="M756.88 249.30L755.15 250.30" stroke="#4848c0" stroke-width="0.6"/><path d="M760.22 255.72L758.41 256.57" stroke="#4848c0" stroke-width="0.6"/><path d="M762.99 262.41L761.12 263.10" stroke="#4848c0" stroke-width="0.6"/><path d="M765.17 269.32L763.24 269.84" stroke="#4848c0" stroke-width="0.6"/><path d="M766.74 276.39L764.77 276.73" stroke="#4848c0" stroke-width="0.6"/><path d="M767.68 283.57L765.69 283.74" stroke="#4848c0" stroke-width="0.6"/><path d="M768.00 290.80L766.00 290.80" stroke="#4848c0" stroke-width="0.6"/><path d="M767.68 298.03L765.69 297.86" stroke="#4848c0" stroke-width="0.6"/><path d="M766.74 305.21L764.77 304.87" stroke="#4848c0" stroke-width="0.6"/><path d="M765.17 312.28L763.24 311.76" stroke="#4848c0" stroke-width="0.6"/><path d="M762.99 319.19L761.12 318.50" stroke="#4848c0" stroke-width="0.6"/><path d="M760.22 325.88L758.41 325.03" stroke="#4848c0" stroke-width="0.6"/><path d="M756.88 332.30L755.15 331.30" stroke="#4848c0" stroke-width="0.6"/><path d="M752.99 338.41L751.35 337.26" stroke="#4848c0" stroke-width="0.6"/><path d="M748.58 344.15L747.05 342.87" stroke="#4848c0" stroke-width="0.6"/><path d="M743.69 349.49L742.28 348.08" stroke="#4848c0" stroke-width="0.6"/><path d="M738.35 354.38L737.07 352.85" stroke="#4848c0" stroke-width="0.6"/><path d="M732.61 358.79L731.46 357.15" stroke="#4848c0" stroke-width="0.6"/><path d="M726.50 362.68L725.50 360.95" stroke="#4848c0" stroke-width="0.6"/><path d="M720.08 366.02L719.23 364.21" stroke="#4848c0" stroke-width="0.6"/><path d="M713.39 368.79L712.70 366.92" stroke="#4848c0" stroke-width="0.6"/><path d="M706.48 370.97L705.96 369.04" stroke="#4848c0" stroke-width="0.6"/><path d="M699.41 372.54L699.07 370.57" stroke="#4848c0" stroke-width="0.6"/><path d="M692.23 373.48L692.06 371.49" stroke="#4848c0" stroke-width="0.6"/><path d="M685.00 373.80L685.00 371.80" stroke="#4848c0" stroke-width="0.6"/><path d="M677.77 373.48L677.94 371.49" stroke="#4848c0" stroke-width="0.6"/><path d="M670.59 372.54L670.93 370.57" stroke="#4848c0" stroke-width="0.6"/><path d="M663.52 370.97L664.04 369.04" stroke="#4848c0" stroke-width="0.6"/><path d="M656.61 368.79L657.30 366.92" stroke="#4848c0" stroke-width="0.6"/><path d="M649.92 366.02L650.77 364.21" stroke="#4848c0" stroke-width="0.6"/><path d="M643.50 362.68L644.50 360.95" stroke="#4848c0" stroke-width="0.6"/><path d="M637.39 358.79L638.54 357.15" stroke="#4848c0" stroke-width="0.6"/><path d="M631.65 354.38L632.93 352.85" stroke="#4848c0" stroke-width="0.6"/><path d="M626.31 349.49L627.72 348.08" stroke="#4848c0" stroke-width="0.6"/><path d="M621.42 344.15L622.95 342.87" stroke="#4848c0" stroke-width="0.6"/><path d="M617.01 338.41L618.65 337.26" stroke="#4848c0" stroke-width="0.6"/><path d="M613.12 332.30L614.85 331.30" stroke="#4848c0" stroke-width="0.6"/><path d="M609.78 325.88L611.59 325.03" stroke="#4848c0" stroke-width="0.6"/><path d="M607.01 319.19L608.88 318.50" stroke="#4848c0" stroke-width="0.6"/><path d="M604.83 312.28L606.76 311.76" stroke="#4848c0" stroke-width="0.6"/><path d="M603.26 305.21L605.23 304.87" stroke="#4848c0" stroke-width="0.6"/><path d="M602.32 298.03L604.31 297.86" stroke="#4848c0" stroke-width="0.6"/><path d="M602.00 290.80L604.00 290.80" stroke="#4848c0" stroke-width="0.6"/><path d="M602.32 283.57L604.31 283.74" stroke="#4848c0" stroke-width="0.6"/><path d="M603.26 276.39L605.23 276.73" stroke="#4848c0" stroke-width="0.6"/><path d="M604.83 269.32L606.76 269.84" stroke="#4848c0" stroke-width="0.6"/><path d="M607.01 262.41L608.88 263.10" stroke="#4848c0" stroke-width="0.6"/><path d="M609.78 255.72L611.59 256.57" stroke="#4848c0" stroke-width="0.6"/><path d="M613.12 249.30L614.85 250.30" stroke="#4848c0" stroke-width="0.6"/><path d="M617.01 243.19L618.65 244.34" stroke="#4848c0" stroke-width="0.6"/><path d="M621.42 237.45L622.95 238.73" stroke="#4848c0" stroke-width="0.6"/><path d="M626.31 232.11L627.72 233.52" stroke="#4848c0" stroke-width="0.6"/><path d="M631.65 227.22L632.93 228.75" stroke="#4848c0" stroke-width="0.6"/><path d="M637.39 222.81L638.54 224.45" stroke="#4848c0" stroke-width="0.6"/><path d="M643.50 218.92L644.50 220.65" stroke="#4848c0" stroke-width="0.6"/><path d="M649.92 215.58L650.77 217.39" stroke="#4848c0" stroke-width="0.6"/><path d="M656.61 212.81L657.30 214.68" stroke="#4848c0" stroke-width="0.6"/><path d="M663.52 210.63L664.04 212.56" stroke="#4848c0" stroke-width="0.6"/><path d="M670.59 209.06L670.93 211.03" stroke="#4848c0" stroke-width="0.6"/><path d="M677.77 208.12L677.94 210.11" stroke="#4848c0" stroke-width="0.6"/><path d="M602 290.8H768M685 207.8V373.8" stroke="#4848c0" stroke-width="0.8"/><path d="M602.00 289.90000000000003V291.7" stroke="#4848c0" stroke-width="0.6"/><path d="M606.61 289.90000000000003V291.7" stroke="#4848c0" stroke-width="0.6"/><path d="M611.22 289.90000000000003V291.7" stroke="#4848c0" stroke-width="0.6"/><path d="M615.83 289.90000000000003V291.7" stroke="#4848c0" stroke-width="0.6"/><path d="M620.44 289.90000000000003V291.7" stroke="#4848c0" stroke-width="0.6"/><path d="M625.06 289.90000000000003V291.7" stroke="#4848c0" stroke-width="0.6"/><path d="M629.67 289.90000000000003V291.7" stroke="#4848c0" stroke-width="0.6"/><path d="M634.28 289.90000000000003V291.7" stroke="#4848c0" stroke-width="0.6"/><path d="M638.89 289.90000000000003V291.7" stroke="#4848c0" stroke-width="0.6"/><path d="M643.50 289.90000000000003V291.7" stroke="#4848c0" stroke-width="0.6"/><path d="M648.11 289.90000000000003V291.7" stroke="#4848c0" stroke-width="0.6"/><path d="M652.72 289.90000000000003V291.7" stroke="#4848c0" stroke-width="0.6"/><path d="M657.33 289.90000000000003V291.7" stroke="#4848c0" stroke-width="0.6"/><path d="M661.94 289.90000000000003V291.7" stroke="#4848c0" stroke-width="0.6"/><path d="M666.56 289.90000000000003V291.7" stroke="#4848c0" stroke-width="0.6"/><path d="M671.17 289.90000000000003V291.7" stroke="#4848c0" stroke-width="0.6"/><path d="M675.78 289.90000000000003V291.7" stroke="#4848c0" stroke-width="0.6"/><path d="M680.39 289.90000000000003V291.7" stroke="#4848c0" stroke-width="0.6"/><path d="M685.00 289.90000000000003V291.7" stroke="#4848c0" stroke-width="0.6"/><path d="M689.61 289.90000000000003V291.7" stroke="#4848c0" stroke-width="0.6"/><path d="M694.22 289.90000000000003V291.7" stroke="#4848c0" stroke-width="0.6"/><path d="M698.83 289.90000000000003V291.7" stroke="#4848c0" stroke-width="0.6"/><path d="M703.44 289.90000000000003V291.7" stroke="#4848c0" stroke-width="0.6"/><path d="M708.06 289.90000000000003V291.7" stroke="#4848c0" stroke-width="0.6"/><path d="M712.67 289.90000000000003V291.7" stroke="#4848c0" stroke-width="0.6"/><path d="M717.28 289.90000000000003V291.7" stroke="#4848c0" stroke-width="0.6"/><path d="M721.89 289.90000000000003V291.7" stroke="#4848c0" stroke-width="0.6"/><path d="M726.50 289.90000000000003V291.7" stroke="#4848c0" stroke-width="0.6"/><path d="M731.11 289.90000000000003V291.7" stroke="#4848c0" stroke-width="0.6"/><path d="M735.72 289.90000000000003V291.7" stroke="#4848c0" stroke-width="0.6"/><path d="M740.33 289.90000000000003V291.7" stroke="#4848c0" stroke-width="0.6"/><path d="M744.94 289.90000000000003V291.7" stroke="#4848c0" stroke-width="0.6"/><path d="M749.56 289.90000000000003V291.7" stroke="#4848c0" stroke-width="0.6"/><path d="M754.17 289.90000000000003V291.7" stroke="#4848c0" stroke-width="0.6"/><path d="M758.78 289.90000000000003V291.7" stroke="#4848c0" stroke-width="0.6"/><path d="M763.39 289.90000000000003V291.7" stroke="#4848c0" stroke-width="0.6"/><path d="M768.00 289.90000000000003V291.7" stroke="#4848c0" stroke-width="0.6"/><path d="M626.31 232.11L743.69 349.49M626.31 349.49L743.69 232.11" stroke="#4848c0" stroke-width="0.8"/><text x="685.00" y="205.44" font-size="5.4" fill="#6060e0" text-anchor="middle" font-weight="400" font-family="Liberation Sans">N</text><text x="748.00" y="230.44" font-size="5.4" fill="#6060e0" text-anchor="middle" font-weight="400" font-family="Liberation Sans">NE</text><text x="770.50" y="292.74" font-size="5.4" fill="#6060e0" text-anchor="middle" font-weight="400" font-family="Liberation Sans">E</text><text x="747.00" y="354.74" font-size="5.4" fill="#6060e0" text-anchor="middle" font-weight="400" font-family="Liberation Sans">SE</text><text x="726.50" y="298.74" font-size="5.4" fill="#6060e0" text-anchor="middle" font-weight="400" font-family="Liberation Sans">45</text><path d="M680 223L700 224.5" stroke="#e020e0" stroke-width="0.8"/><path d="M697.8 224.5H702.2M700 222.3V226.7" stroke="#e8e020" stroke-width="0.7"/><path d="M700 224.5L722.5 228.5" stroke="#e8e020" stroke-width="0.8"/><path d="M716 262L727 252" stroke="#20d020" stroke-width="0.9"/><path d="M724.8 252H729.2M727 249.8V254.2" stroke="#20d020" stroke-width="0.7"/><rect x="725.5" y="250.8" width="3" height="3" fill="none" stroke="#20d020" stroke-width="0.6"/><path d="M727.5 254.5L726.8 271" stroke="#20d020" stroke-width="0.8"/><path d="M740.8 246H745.2M743 243.8V248.2" stroke="#e8e020" stroke-width="0.7"/><path d="M743 246L751.5 250.5" stroke="#e8e020" stroke-width="0.8"/><path d="M686.3 290.8H690.7M688.5 288.6V293.0" stroke="#e02828" stroke-width="0.7"/><path d="M687 303L691.5 318" stroke="#e020e0" stroke-width="0.8"/><path d="M689.3 318H693.7M691.5 315.8V320.2" stroke="#e020e0" stroke-width="0.7"/><path d="M697 305L700 332" stroke="#e8e020" stroke-width="0.8"/><path d="M697.8 332H702.2M700 329.8V334.2" stroke="#e8e020" stroke-width="0.7"/><path d="M719.8 338L721.3 356" stroke="#20d020" stroke-width="0.8"/><path d="M719.0999999999999 356H723.5M721.3 353.8V358.2" stroke="#20d020" stroke-width="0.7"/><path d="M751.8 301.5H756.2M754 299.3V303.7" stroke="#e020e0" stroke-width="0.7"/><path d="M754 301.5L760 312" stroke="#e020e0" stroke-width="0.8"/><path d="M684.8 364H689.2M687 361.8V366.2" stroke="#e02828" stroke-width="0.7"/><path d="M688 295L690 299" stroke="#20d020" stroke-width="0.8"/><text x="687.50" y="217.55" font-size="8.2" fill="#e020e0" text-anchor="middle" font-weight="400" font-family="Liberation Sans">G5</text><text x="709.50" y="220.95" font-size="8.2" fill="#e8e020" text-anchor="middle" font-weight="400" font-family="Liberation Sans">G3</text><text x="753.50" y="240.95" font-size="8.2" fill="#e8e020" text-anchor="middle" font-weight="400" font-family="Liberation Sans">G4*</text><text x="715.00" y="246.45" font-size="8.2" fill="#20d020" text-anchor="middle" font-weight="400" font-family="Liberation Sans">G19</text><text x="736.50" y="249.75" font-size="8.2" fill="#20d020" text-anchor="middle" font-weight="400" font-family="Liberation Sans">17*</text><text x="701.50" y="285.35" font-size="8.2" fill="#e02828" text-anchor="middle" font-weight="400" font-family="Liberation Sans">G20*</text><text x="696.00" y="296.55" font-size="8.2" fill="#20d020" text-anchor="middle" font-weight="400" font-family="Liberation Sans">9*</text><text x="761.00" y="296.55" font-size="8.2" fill="#e020e0" text-anchor="middle" font-weight="400" font-family="Liberation Sans">4*</text><text x="702.00" y="314.55" font-size="8.2" fill="#e020e0" text-anchor="middle" font-weight="400" font-family="Liberation Sans">G10</text><text x="710.50" y="326.35" font-size="8.2" fill="#e8e020" text-anchor="middle" font-weight="400" font-family="Liberation Sans">G12</text><text x="730.50" y="350.15" font-size="8.2" fill="#20d020" text-anchor="middle" font-weight="400" font-family="Liberation Sans">G9*</text><text x="696.50" y="359.95" font-size="8.2" fill="#e02828" text-anchor="middle" font-weight="400" font-family="Liberation Sans">15*</text></svg>
<span style="left:686.3px;top:405.02px;font-size:6px;color:#000;font-weight:400;">232 (All = 1.6406)</span>
<div style="left:202px;top:153px;width:112px;height:80px;background:#D4D0C8;box-shadow:inset 1px 1px #D4D0C8,inset -1px -1px #404040,inset 2px 2px #fff,inset -2px -2px #808080"></div>
<div style="left:204px;top:155.5px;width:107.5px;height:8.5px;background:linear-gradient(90deg,#808080,#C0C0C0)"></div>
<div style="left:204.3px;top:156.5px;width:7.6px;height:6.5px;background:#fff;border:0.7px solid #3060b0;border-top:1.3px solid #2060d0;box-sizing:border-box"></div>
<span style="left:213.3px;top:157.70px;font-size:5.4px;color:#e4e2de;font-weight:700;">Date/Time</span>
<div style="left:286.9px;top:156.1px;width:7.4px;height:7.3px;background:#D4D0C8;box-shadow:inset -1px -1px #404040,inset 1px 1px #fff,inset -2px -2px #808080;"></div>
<div style="left:288.9px;top:160.6px;width:3px;height:1px;background:#000"></div>
<div style="left:294.6px;top:156.1px;width:7.4px;height:7.3px;background:#D4D0C8;box-shadow:inset -1px -1px #404040,inset 1px 1px #fff,inset -2px -2px #808080;"></div>
<div style="left:296.40000000000003px;top:157.5px;width:4.2px;height:4.3px;border:0.8px solid #000;border-top-width:1.4px;box-sizing:border-box"></div>
<div style="left:302.90000000000003px;top:156.1px;width:7.4px;height:7.3px;background:#D4D0C8;box-shadow:inset -1px -1px #404040,inset 1px 1px #fff,inset -2px -2px #808080;"></div>
<svg style="position:absolute;left:302.90000000000003px;top:156.1px;" width="7.7" height="7.3" viewBox="0 0 7.7 7.3"><path d="M2.2 1.8L5.1 5.1M5.1 1.8L2.2 5.1" stroke="#000" stroke-width="1"/></svg>
<div style="left:204px;top:164.5px;width:108px;height:70px;box-shadow:inset 1px 1px #a0a0a0"></div>
<span style="left:207px;top:168.02px;font-size:5.2px;color:#000;font-weight:400;">Start time</span>
<span style="left:252px;top:168.02px;font-size:5.2px;color:#000;font-weight:400;">08-Jan-2012 01:00:00</span>
<span style="left:207px;top:177.32px;font-size:5.2px;color:#000;font-weight:400;">Current time</span>
<div style="left:250px;top:175px;width:60.5px;height:8.5px;background:#fff;box-shadow:inset 1px 1px #808080,inset -1px -1px #fff;"></div>
<span style="left:252px;top:177.32px;font-size:5.2px;color:#000;font-weight:400;">08-Jan-2012 01:38:48</span>
<span style="left:207px;top:186.52px;font-size:5.2px;color:#000;font-weight:400;">End time</span>
<span style="left:253px;top:186.52px;font-size:5.2px;color:#000;font-weight:400;">17-Jan-2012 01:00:00</span>
<span style="left:207px;top:199.32px;font-size:5.2px;color:#000;font-weight:400;">Time into run</span>
<div style="left:250px;top:197px;width:60.5px;height:8.5px;background:#fff;box-shadow:inset 1px 1px #808080,inset -1px -1px #fff;"></div>
<span style="left:252px;top:199.32px;font-size:5.2px;color:#000;font-weight:400;">00:38:48</span>
<span style="left:207px;top:208.32px;font-size:5.2px;color:#000;font-weight:400;">Duration</span>
<span style="left:252px;top:208.32px;font-size:5.2px;color:#000;font-weight:400;">9 00:00:00</span>
<div style="left:323.3px;top:128px;width:268.5px;height:100px;background:#D4D0C8;box-shadow:inset 1px 1px #D4D0C8,inset -1px -1px #404040,inset 2px 2px #fff,inset -2px -2px #808080"></div>
<div style="left:325.3px;top:130.5px;width:264.0px;height:8.5px;background:linear-gradient(90deg,#808080,#C0C0C0)"></div>
<div style="left:325.6px;top:131.5px;width:7.6px;height:6.5px;background:#fff;border:0.7px solid #3060b0;border-top:1.3px solid #2060d0;box-sizing:border-box"></div>
<span style="left:334.6px;top:132.70px;font-size:5.4px;color:#e4e2de;font-weight:700;">Channel Assignment</span>
<div style="left:564.6999999999999px;top:131.1px;width:7.4px;height:7.3px;background:#D4D0C8;box-shadow:inset -1px -1px #404040,inset 1px 1px #fff,inset -2px -2px #808080;"></div>
<div style="left:566.6999999999999px;top:135.6px;width:3px;height:1px;background:#000"></div>
<div style="left:572.4px;top:131.1px;width:7.4px;height:7.3px;background:#D4D0C8;box-shadow:inset -1px -1px #404040,inset 1px 1px #fff,inset -2px -2px #808080;"></div>
<div style="left:574.1999999999999px;top:132.5px;width:4.2px;height:4.3px;border:0.8px solid #000;border-top-width:1.4px;box-sizing:border-box"></div>
<div style="left:580.6999999999999px;top:131.1px;width:7.4px;height:7.3px;background:#D4D0C8;box-shadow:inset -1px -1px #404040,inset 1px 1px #fff,inset -2px -2px #808080;"></div>
<svg style="position:absolute;left:580.6999999999999px;top:131.1px;" width="7.7" height="7.3" viewBox="0 0 7.7 7.3"><path d="M2.2 1.8L5.1 5.1M5.1 1.8L2.2 5.1" stroke="#000" stroke-width="1"/></svg>
<div style="left:326.5px;top:140px;width:122.5px;height:90px;box-shadow:inset 1px 1px #909090,inset -1px -1px #a8a8a8,1px 1px #f4f4f4;"></div>
<div style="left:449.5px;top:140px;width:131px;height:90px;box-shadow:inset 1px 1px #909090,inset -1px -1px #a8a8a8,1px 1px #f4f4f4;"></div>
<span style="left:329px;top:145.53px;font-size:6.5px;color:#000;font-weight:400;">Visible satellites</span>
<span style="left:239.5px;width:200px;text-align:center;top:159.03px;font-size:6.5px;color:#000;font-weight:400;">SVID</span>
<span style="left:264px;width:200px;text-align:center;top:159.03px;font-size:6.5px;color:#000;font-weight:400;">Forced on</span>
<span style="left:298.5px;width:200px;text-align:center;top:159.03px;font-size:6.5px;color:#000;font-weight:400;">State</span>
<span style="left:329.5px;width:200px;text-align:center;top:159.03px;font-size:6.5px;color:#000;font-weight:400;">Settings</span>
<div style="left:329.5px;top:169.0px;width:19px;height:9.5px;background:#00ff00;box-shadow:inset 1px 1px #808080,inset -1px -1px #fff;"></div>
<span style="left:239px;width:200px;text-align:center;top:171.43px;font-size:6.5px;color:#000;font-weight:400;">E1</span>
<div style="left:350px;top:169.0px;width:28.5px;height:9.5px;background:#D4D0C8;box-shadow:inset 1px 1px #808080,inset -1px -1px #fff;"></div>
<span style="left:264px;width:200px;text-align:center;top:171.43px;font-size:6.5px;color:#000;font-weight:400;">none</span>
<div style="left:380.5px;top:169.0px;width:34px;height:9.5px;background:#fff;box-shadow:inset 1px 1px #808080,inset -1px -1px #fff;"></div>
<span style="left:381.5px;top:171.43px;font-size:6.5px;color:#000;font-weight:400;">Normal</span>
<div style="left:406.5px;top:170.0px;width:7.5px;height:7.5px;background:#D4D0C8;box-shadow:inset -1px -1px #404040,inset 1px 1px #fff;"></div>
<svg style="position:absolute;left:408.5px;top:173.0px" width="4" height="3"><path d="M0 0.3H3.6L1.8 2.5Z" fill="#000"/></svg>
<div style="left:416px;top:169.0px;width:27px;height:9.5px;background:#D4D0C8;box-shadow:inset -1px -1px #404040,inset 1px 1px #fff,inset -2px -2px #808080;"></div>
<span style="left:329.5px;width:200px;text-align:center;top:171.43px;font-size:6.5px;color:#a0a0a0;font-weight:400;text-shadow:0.6px 0.6px #fff">Settings</span>
<div style="left:329.5px;top:182.3px;width:19px;height:9.5px;background:#00ff00;box-shadow:inset 1px 1px #808080,inset -1px -1px #fff;"></div>
<span style="left:239px;width:200px;text-align:center;top:184.73px;font-size:6.5px;color:#000;font-weight:400;">*4</span>
<div style="left:350px;top:182.3px;width:28.5px;height:9.5px;background:#D4D0C8;box-shadow:inset 1px 1px #808080,inset -1px -1px #fff;"></div>
<span style="left:264px;width:200px;text-align:center;top:184.73px;font-size:6.5px;color:#000;font-weight:400;">none</span>
<div style="left:380.5px;top:182.3px;width:34px;height:9.5px;background:#fff;box-shadow:inset 1px 1px #808080,inset -1px -1px #fff;"></div>
<span style="left:381.5px;top:184.73px;font-size:6.5px;color:#000;font-weight:400;">Normal</span>
<div style="left:406.5px;top:183.3px;width:7.5px;height:7.5px;background:#D4D0C8;box-shadow:inset -1px -1px #404040,inset 1px 1px #fff;"></div>
<svg style="position:absolute;left:408.5px;top:186.3px" width="4" height="3"><path d="M0 0.3H3.6L1.8 2.5Z" fill="#000"/></svg>
<div style="left:416px;top:182.3px;width:27px;height:9.5px;background:#D4D0C8;box-shadow:inset -1px -1px #404040,inset 1px 1px #fff,inset -2px -2px #808080;"></div>
<span style="left:329.5px;width:200px;text-align:center;top:184.73px;font-size:6.5px;color:#a0a0a0;font-weight:400;text-shadow:0.6px 0.6px #fff">Settings</span>
<div style="left:329.5px;top:195.6px;width:19px;height:9.5px;background:#00ff00;box-shadow:inset 1px 1px #808080,inset -1px -1px #fff;"></div>
<span style="left:239px;width:200px;text-align:center;top:198.03px;font-size:6.5px;color:#000;font-weight:400;">5</span>
<div style="left:350px;top:195.6px;width:28.5px;height:9.5px;background:#D4D0C8;box-shadow:inset 1px 1px #808080,inset -1px -1px #fff;"></div>
<span style="left:264px;width:200px;text-align:center;top:198.03px;font-size:6.5px;color:#000;font-weight:400;">none</span>
<div style="left:380.5px;top:195.6px;width:34px;height:9.5px;background:#fff;box-shadow:inset 1px 1px #808080,inset -1px -1px #fff;"></div>
<span style="left:381.5px;top:198.03px;font-size:6.5px;color:#000;font-weight:400;">Normal</span>
<div style="left:406.5px;top:196.6px;width:7.5px;height:7.5px;background:#D4D0C8;box-shadow:inset -1px -1px #404040,inset 1px 1px #fff;"></div>
<svg style="position:absolute;left:408.5px;top:199.6px" width="4" height="3"><path d="M0 0.3H3.6L1.8 2.5Z" fill="#000"/></svg>
<div style="left:416px;top:195.6px;width:27px;height:9.5px;background:#D4D0C8;box-shadow:inset -1px -1px #404040,inset 1px 1px #fff,inset -2px -2px #808080;"></div>
<span style="left:329.5px;width:200px;text-align:center;top:198.03px;font-size:6.5px;color:#a0a0a0;font-weight:400;text-shadow:0.6px 0.6px #fff">Settings</span>
<div style="left:329.5px;top:208.9px;width:19px;height:9.5px;background:#00ff00;box-shadow:inset 1px 1px #808080,inset -1px -1px #fff;"></div>
<span style="left:239px;width:200px;text-align:center;top:211.33px;font-size:6.5px;color:#000;font-weight:400;">*9</span>
<div style="left:350px;top:208.9px;width:28.5px;height:9.5px;background:#D4D0C8;box-shadow:inset 1px 1px #808080,inset -1px -1px #fff;"></div>
<span style="left:264px;width:200px;text-align:center;top:211.33px;font-size:6.5px;color:#000;font-weight:400;">none</span>
<div style="left:380.5px;top:208.9px;width:34px;height:9.5px;background:#fff;box-shadow:inset 1px 1px #808080,inset -1px -1px #fff;"></div>
<span style="left:381.5px;top:211.33px;font-size:6.5px;color:#000;font-weight:400;">Multipath</span>
<div style="left:406.5px;top:209.9px;width:7.5px;height:7.5px;background:#D4D0C8;box-shadow:inset -1px -1px #404040,inset 1px 1px #fff;"></div>
<svg style="position:absolute;left:408.5px;top:212.9px" width="4" height="3"><path d="M0 0.3H3.6L1.8 2.5Z" fill="#000"/></svg>
<div style="left:416px;top:208.9px;width:27px;height:9.5px;background:#D4D0C8;box-shadow:inset -1px -1px #404040,inset 1px 1px #fff,inset -2px -2px #808080;"></div>
<span style="left:329.5px;width:200px;text-align:center;top:211.33px;font-size:6.5px;color:#000;font-weight:400;">Settings</span>
<span style="left:456px;top:145.53px;font-size:6.5px;color:#000;font-weight:400;">Simulated satellites</span>
<span style="left:367px;width:200px;text-align:center;top:159.03px;font-size:6.5px;color:#000;font-weight:400;">Channel</span>
<span style="left:396px;width:200px;text-align:center;top:159.03px;font-size:6.5px;color:#000;font-weight:400;">Network</span>
<span style="left:423px;width:200px;text-align:center;top:159.03px;font-size:6.5px;color:#000;font-weight:400;">SVID</span>
<div style="left:456px;top:169.0px;width:23px;height:9.5px;background:#D4D0C8;box-shadow:inset 1px 1px #808080,inset -1px -1px #fff;"></div>
<span style="left:367.5px;width:200px;text-align:center;top:171.43px;font-size:6.5px;color:#000;font-weight:400;">1</span>
<div style="left:480px;top:169.0px;width:32.5px;height:9.5px;background:#D4D0C8;box-shadow:inset 1px 1px #808080,inset -1px -1px #fff;"></div>
<span style="left:396px;width:200px;text-align:center;top:171.43px;font-size:6.5px;color:#000;font-weight:400;">GPS</span>
<div style="left:513px;top:169.0px;width:20.5px;height:9.5px;background:#00ff00;box-shadow:inset 1px 1px #808080,inset -1px -1px #fff;"></div>
<span style="left:423px;width:200px;text-align:center;top:171.43px;font-size:6.5px;color:#000;font-weight:400;">E1</span>
<div style="left:456px;top:182.3px;width:23px;height:9.5px;background:#D4D0C8;box-shadow:inset 1px 1px #808080,inset -1px -1px #fff;"></div>
<span style="left:367.5px;width:200px;text-align:center;top:184.73px;font-size:6.5px;color:#000;font-weight:400;">2</span>
<div style="left:480px;top:182.3px;width:32.5px;height:9.5px;background:#D4D0C8;box-shadow:inset 1px 1px #808080,inset -1px -1px #fff;"></div>
<span style="left:396px;width:200px;text-align:center;top:184.73px;font-size:6.5px;color:#000;font-weight:400;">GPS</span>
<div style="left:513px;top:182.3px;width:20.5px;height:9.5px;background:#00ff00;box-shadow:inset 1px 1px #808080,inset -1px -1px #fff;"></div>
<span style="left:423px;width:200px;text-align:center;top:184.73px;font-size:6.5px;color:#000;font-weight:400;">9</span>
<div style="left:456px;top:195.6px;width:23px;height:9.5px;background:#D4D0C8;box-shadow:inset 1px 1px #808080,inset -1px -1px #fff;"></div>
<span style="left:367.5px;width:200px;text-align:center;top:198.03px;font-size:6.5px;color:#000;font-weight:400;">3</span>
<div style="left:480px;top:195.6px;width:32.5px;height:9.5px;background:#D4D0C8;box-shadow:inset 1px 1px #808080,inset -1px -1px #fff;"></div>
<span style="left:396px;width:200px;text-align:center;top:198.03px;font-size:6.5px;color:#000;font-weight:400;">GPS</span>
<div style="left:513px;top:195.6px;width:20.5px;height:9.5px;background:#00ff00;box-shadow:inset 1px 1px #808080,inset -1px -1px #fff;"></div>
<span style="left:423px;width:200px;text-align:center;top:198.03px;font-size:6.5px;color:#000;font-weight:400;">9.1</span>
<div style="left:456px;top:208.9px;width:23px;height:9.5px;background:#D4D0C8;box-shadow:inset 1px 1px #808080,inset -1px -1px #fff;"></div>
<span style="left:367.5px;width:200px;text-align:center;top:211.33px;font-size:6.5px;color:#000;font-weight:400;">4</span>
<div style="left:480px;top:208.9px;width:32.5px;height:9.5px;background:#D4D0C8;box-shadow:inset 1px 1px #808080,inset -1px -1px #fff;"></div>
<span style="left:396px;width:200px;text-align:center;top:211.33px;font-size:6.5px;color:#000;font-weight:400;">GPS</span>
<div style="left:513px;top:208.9px;width:20.5px;height:9.5px;background:#00ff00;box-shadow:inset 1px 1px #808080,inset -1px -1px #fff;"></div>
<span style="left:423px;width:200px;text-align:center;top:211.33px;font-size:6.5px;color:#000;font-weight:400;">12</span>
<div style="left:582px;top:140px;width:8px;height:90px;background:#e8e6e2"></div>
<div style="left:582px;top:140px;width:8px;height:7.5px;background:#D4D0C8;box-shadow:inset -1px -1px #404040,inset 1px 1px #fff,inset -2px -2px #808080;"></div>
<svg style="position:absolute;left:583.8px;top:142px" width="5" height="4"><path d="M0.2 3H4.4L2.3 0.6Z" fill="#000"/></svg>
<div style="left:570px;top:418px;width:229px;height:58px;background:#D4D0C8;box-shadow:inset 1px 1px #D4D0C8,inset -1px -1px #404040,inset 2px 2px #fff,inset -2px -2px #808080"></div>
<div style="left:572px;top:420.5px;width:224.5px;height:8.5px;background:linear-gradient(90deg,#808080,#C0C0C0)"></div>
<div style="left:572.3px;top:421.5px;width:7.6px;height:6.5px;background:#fff;border:0.7px solid #3060b0;border-top:1.3px solid #2060d0;box-sizing:border-box"></div>
<span style="left:581.3px;top:422.70px;font-size:5.4px;color:#e4e2de;font-weight:700;">Messages</span>
<div style="left:771.9px;top:421.1px;width:7.4px;height:7.3px;background:#D4D0C8;box-shadow:inset -1px -1px #404040,inset 1px 1px #fff,inset -2px -2px #808080;"></div>
<div style="left:773.9px;top:425.6px;width:3px;height:1px;background:#000"></div>
<div style="left:779.6px;top:421.1px;width:7.4px;height:7.3px;background:#D4D0C8;box-shadow:inset -1px -1px #404040,inset 1px 1px #fff,inset -2px -2px #808080;"></div>
<div style="left:781.4px;top:422.5px;width:4.2px;height:4.3px;border:0.8px solid #000;border-top-width:1.4px;box-sizing:border-box"></div>
<div style="left:787.9px;top:421.1px;width:7.4px;height:7.3px;background:#D4D0C8;box-shadow:inset -1px -1px #404040,inset 1px 1px #fff,inset -2px -2px #808080;"></div>
<svg style="position:absolute;left:787.9px;top:421.1px;" width="7.7" height="7.3" viewBox="0 0 7.7 7.3"><path d="M2.2 1.8L5.1 5.1M5.1 1.8L2.2 5.1" stroke="#000" stroke-width="1"/></svg>
<div style="left:573.5px;top:430.5px;width:215px;height:35.5px;background:#fff"></div>
<span style="left:577px;top:459.72px;font-size:6px;color:#2e922e;font-weight:400;">00:00:00 Info: SimGEN V2.84</span>
<span style="left:688px;top:436.32px;font-size:6px;color:#2e922e;font-weight:400;">Multibox GSS8000 #8650 + #8640 MOD</span>
<span style="left:688px;top:444.52px;font-size:6px;color:#2e922e;font-weight:400;">100 ms</span>
<span style="left:681px;top:452.42px;font-size:6px;color:#2e922e;font-weight:400;">Scn: started on Tue May 10 11:24:38 2011</span>
<span style="left:681px;top:429.02px;font-size:6px;color:#2e922e;font-weight:400;">'</span>
<div style="left:788px;top:430.5px;width:8px;height:35.5px;background:#e8e6e2"></div>
<div style="left:788px;top:430.5px;width:8px;height:7.5px;background:#D4D0C8;box-shadow:inset -1px -1px #404040,inset 1px 1px #fff,inset -2px -2px #808080;"></div>
<div style="left:788px;top:458px;width:8px;height:7.5px;background:#D4D0C8;box-shadow:inset -1px -1px #404040,inset 1px 1px #fff,inset -2px -2px #808080;"></div>
<svg style="position:absolute;left:789.5px;top:432.5px" width="5" height="4"><path d="M0.2 3H4.4L2.3 0.6Z" fill="#000"/></svg>
<svg style="position:absolute;left:789.5px;top:460px" width="5" height="4"><path d="M0.2 0.6H4.4L2.3 3Z" fill="#000"/></svg>
<div style="left:573.5px;top:466px;width:222.5px;height:8px;background:#e8e6e2"></div>
<div style="left:573.5px;top:466px;width:8px;height:7.5px;background:#D4D0C8;box-shadow:inset -1px -1px #404040,inset 1px 1px #fff,inset -2px -2px #808080;"></div>
<div style="left:582px;top:466px;width:31px;height:7.5px;background:#D4D0C8;box-shadow:inset -1px -1px #404040,inset 1px 1px #fff,inset -2px -2px #808080;"></div>
<div style="left:780px;top:466px;width:8px;height:7.5px;background:#D4D0C8;box-shadow:inset -1px -1px #404040,inset 1px 1px #fff,inset -2px -2px #808080;"></div>
<svg style="position:absolute;left:575.5px;top:467.5px" width="4" height="5"><path d="M3 0.5V4L0.8 2.3Z" fill="#000"/></svg>
<svg style="position:absolute;left:782.5px;top:467.5px" width="4" height="5"><path d="M0.8 0.5V4L3 2.3Z" fill="#000"/></svg>
<div style="left:788px;top:466px;width:8px;height:8px;background:#D4D0C8"></div>
<svg style="position:absolute;left:788px;top:466px;" width="8" height="8" viewBox="0 0 8 8"><path d="M7.5 2L2 7.5M7.5 4.5L4.5 7.5M7.5 6.5L6.5 7.5" stroke="#909090" stroke-width="0.7"/></svg>
<div style="left:200px;top:440px;width:371.5px;height:37px;background:#D4D0C8;box-shadow:inset 1px 1px #D4D0C8,inset -1px -1px #404040,inset 2px 2px #fff,inset -2px -2px #808080"></div>
<div style="left:202px;top:442.5px;width:367.0px;height:8.5px;background:linear-gradient(90deg,#808080,#C0C0C0)"></div>
<div style="left:202.3px;top:443.5px;width:7.6px;height:6.5px;background:#fff;border:0.7px solid #3060b0;border-top:1.3px solid #2060d0;box-sizing:border-box"></div>
<span style="left:211.3px;top:444.70px;font-size:5.4px;color:#e4e2de;font-weight:700;">Position</span>
<div style="left:544.4px;top:443.1px;width:7.4px;height:7.3px;background:#D4D0C8;box-shadow:inset -1px -1px #404040,inset 1px 1px #fff,inset -2px -2px #808080;"></div>
<div style="left:546.4px;top:447.6px;width:3px;height:1px;background:#000"></div>
<div style="left:552.1px;top:443.1px;width:7.4px;height:7.3px;background:#D4D0C8;box-shadow:inset -1px -1px #404040,inset 1px 1px #fff,inset -2px -2px #808080;"></div>
<div style="left:553.9px;top:444.5px;width:4.2px;height:4.3px;border:0.8px solid #000;border-top-width:1.4px;box-sizing:border-box"></div>
<div style="left:560.4px;top:443.1px;width:7.4px;height:7.3px;background:#D4D0C8;box-shadow:inset -1px -1px #404040,inset 1px 1px #fff,inset -2px -2px #808080;"></div>
<svg style="position:absolute;left:560.4px;top:443.1px;" width="7.7" height="7.3" viewBox="0 0 7.7 7.3"><path d="M2.2 1.8L5.1 5.1M5.1 1.8L2.2 5.1" stroke="#000" stroke-width="1"/></svg>
<div style="left:203px;top:444px;width:366px;height:15px;background:#000"></div>
<span style="left:120px;width:200px;text-align:center;top:454.55px;font-size:5.4px;color:#c8c8c8;font-weight:400;">270</span>
<span style="left:151px;width:200px;text-align:center;top:454.55px;font-size:5.4px;color:#c8c8c8;font-weight:400;">180</span>
<span style="left:186px;width:200px;text-align:center;top:454.55px;font-size:5.4px;color:#c8c8c8;font-weight:400;">120</span>
<span style="left:221.5px;width:200px;text-align:center;top:454.55px;font-size:5.4px;color:#c8c8c8;font-weight:400;">60</span>
<span style="left:257px;width:200px;text-align:center;top:454.55px;font-size:5.4px;color:#c8c8c8;font-weight:400;">12</span>
<span style="left:291px;width:200px;text-align:center;top:454.55px;font-size:5.4px;color:#c8c8c8;font-weight:400;">0</span>
<span style="left:327px;width:200px;text-align:center;top:454.55px;font-size:5.4px;color:#c8c8c8;font-weight:400;">12</span>
<span style="left:362px;width:200px;text-align:center;top:454.55px;font-size:5.4px;color:#c8c8c8;font-weight:400;">60</span>
<span style="left:397px;width:200px;text-align:center;top:454.55px;font-size:5.4px;color:#c8c8c8;font-weight:400;">120</span>
<span style="left:432px;width:200px;text-align:center;top:454.55px;font-size:5.4px;color:#c8c8c8;font-weight:400;">180</span>
<span style="left:465px;width:200px;text-align:center;top:454.55px;font-size:5.4px;color:#c8c8c8;font-weight:400;">E</span>
<div style="left:203px;top:459px;width:366px;height:15.5px;background:#D4D0C8"></div>
<span style="left:209px;top:465.02px;font-size:6px;color:#000;font-weight:400;">Latitude:</span>
<div style="left:247px;top:462.5px;width:56.5px;height:8.5px;background:#fff;box-shadow:inset 1px 1px #808080,inset -1px -1px #fff;"></div>
<span style="left:175.2px;width:200px;text-align:center;top:464.87px;font-size:5.6px;color:#000;font-weight:400;">55° 44.7317008'</span>
<span style="left:316px;top:465.02px;font-size:6px;color:#000;font-weight:400;">Longitude:</span>
<div style="left:354px;top:462.5px;width:56.5px;height:8.5px;background:#fff;box-shadow:inset 1px 1px #808080,inset -1px -1px #fff;"></div>
<span style="left:282.2px;width:200px;text-align:center;top:464.87px;font-size:5.6px;color:#000;font-weight:400;">37° 43.5449308'</span>
<span style="left:423px;top:465.02px;font-size:6px;color:#000;font-weight:400;">Height</span>
<div style="left:461px;top:462.5px;width:56.5px;height:8.5px;background:#fff;box-shadow:inset 1px 1px #808080,inset -1px -1px #fff;"></div>
<span style="left:380px;width:200px;text-align:center;top:464.87px;font-size:5.6px;color:#000;font-weight:400;">191.61 m</span>
<div style="left:0px;top:33.5px;width:200px;height:7.5px;background:#D4D0C8"></div>
<div style="left:1px;top:35px;width:192px;height:5px;background:#c4c2bc;box-shadow:inset 1px 1px #fff,inset -1px -1px #a0a0a0"></div>
<svg style="position:absolute;left:194px;top:35px;" width="5" height="5" viewBox="0 0 5 5"><path d="M1 1L4 4M4 1L1 4" stroke="#000" stroke-width="1.1"/></svg>
<div style="left:1px;top:40.5px;width:198px;height:400px;background:#fff;box-shadow:inset 1px 1px #909090,inset 2px 2px #c8c8c8,inset -1px -1px #fff"></div>
<div style="left:3px;top:433px;width:195px;height:7px;background:#e6e4e0"></div>
<div style="left:3px;top:433px;width:7px;height:7px;background:#D4D0C8;box-shadow:inset -1px -1px #404040,inset 1px 1px #fff;"></div>
<svg style="position:absolute;left:4.5px;top:434.5px" width="4" height="4"><path d="M3 0.5V3.5L0.8 2Z" fill="#000"/></svg>
<div style="left:14.9px;top:48.7px;width:1px;height:202.389px;background:#c4c4c4"></div>
<div style="left:23.9px;top:71.521px;width:1px;height:65.46300000000001px;background:#c4c4c4"></div>
<div style="left:23.9px;top:147.591px;width:1px;height:4.606999999999999px;background:#c4c4c4"></div>
<div style="left:23.9px;top:162.805px;width:1px;height:12.213999999999999px;background:#c4c4c4"></div>
<div style="left:23.9px;top:185.62600000000003px;width:1px;height:19.82099999999997px;background:#c4c4c4"></div>
<div style="left:23.9px;top:216.05400000000003px;width:1px;height:12.213999999999999px;background:#c4c4c4"></div>
<div style="left:23.9px;top:254.089px;width:1px;height:88.28399999999999px;background:#c4c4c4"></div>
<div style="left:32.9px;top:261.696px;width:1px;height:4.606999999999971px;background:#c4c4c4"></div>
<div style="left:32.9px;top:276.91px;width:1px;height:27.427999999999997px;background:#c4c4c4"></div>
<div style="left:32.9px;top:314.945px;width:1px;height:19.821000000000026px;background:#c4c4c4"></div>
<div style="left:32.9px;top:345.373px;width:1px;height:42.641999999999996px;background:#c4c4c4"></div>
<div style="left:41.9px;top:360.587px;width:1px;height:19.821000000000026px;background:#c4c4c4"></div>
<div style="left:41.9px;top:391.015px;width:1px;height:19.821000000000026px;background:#c4c4c4"></div>
<div style="left:4.1000000000000005px;top:43.1px;width:4.8px;height:5.2px;background:#fff;border:1px solid #c8c8c8"></div>
<div style="left:5.1000000000000005px;top:45.35px;width:2.6px;height:1px;background:#707070"></div>
<svg style="position:absolute;left:9.0px;top:41.7px;" width="10" height="8" viewBox="0 0 10 8"><path d="M5 0.5V7.5M1 4H9" stroke="#40e8ff" stroke-width="2.2"/><path d="M0 4H10" stroke="#1010a0" stroke-width="1.2"/><circle cx="5" cy="4" r="1.6" fill="#c0f8ff"/></svg>
<span style="left:21.0px;top:43.76px;font-size:5.25px;color:#000;font-weight:400;">Scenario - static.scn</span>
<div style="left:15.4px;top:52.807px;width:5px;height:1px;background:#c4c4c4"></div>
<svg style="position:absolute;left:21.7px;top:49.707px;" width="6.5" height="7.5" viewBox="0 0 6.5 7.5"><path d="M0.8 0.6H4L5.6 2.2V6.9H0.8Z" fill="#8c8c8c" stroke="#404040" stroke-width="0.6"/><path d="M4 0.6V2.2H5.6" fill="#e0e0e0" stroke="#404040" stroke-width="0.5"/><path d="M1.8 2.6H3.6M1.8 3.9H4.6M1.8 5.2H4.6" stroke="#d8d8d8" stroke-width="0.6"/></svg>
<span style="left:30.0px;top:51.36px;font-size:5.25px;color:#000;font-weight:400;">Scenario description file:</span>
<div style="left:15.4px;top:60.414px;width:5px;height:1px;background:#c4c4c4"></div>
<svg style="position:absolute;left:21.2px;top:57.214px;" width="7.5" height="7.5" viewBox="0 0 7.5 7.5"><circle cx="3.75" cy="3.75" r="3" fill="#fff" stroke="#000" stroke-width="0.75"/><path d="M3.75 1.6V3.9H5.4" stroke="#000" stroke-width="0.7" fill="none"/></svg>
<span style="left:30.0px;top:58.97px;font-size:5.25px;color:#000;font-weight:400;">Start time: 08-Jan-2012 01:00:00, Duration: 9 00:00:00</span>
<div style="left:15.4px;top:68.021px;width:5px;height:1px;background:#c4c4c4"></div>
<div style="left:13.100000000000001px;top:65.921px;width:4.8px;height:5.2px;background:#fff;border:1px solid #c8c8c8"></div>
<div style="left:14.1px;top:68.171px;width:2.6px;height:1px;background:#707070"></div>
<div style="left:22.7px;top:68.021px;width:3px;height:1px;background:#222"></div>
<div style="left:23.7px;top:67.021px;width:1px;height:3px;background:#222"></div>
<span style="left:30.0px;top:66.58px;font-size:5.25px;color:#000;font-weight:400;">Options</span>
<div style="left:24.4px;top:75.628px;width:5px;height:1px;background:#c4c4c4"></div>
<div style="left:30.0px;top:72.828px;width:6.8px;height:6.8px;background:#fff;border:1px solid #b4b4b4"></div>
<svg style="position:absolute;left:38.0px;top:72.428px;" width="7.5" height="7.5" viewBox="0 0 7.5 7.5"><circle cx="3.75" cy="3.75" r="3" fill="#fff" stroke="#000" stroke-width="0.75"/><path d="M3.75 1.6V3.9H5.4" stroke="#000" stroke-width="0.7" fill="none"/></svg>
<span style="left:47.0px;top:74.18px;font-size:5.25px;color:#000;font-weight:400;">Leap second at: 31-Dec-2006 23:59:59</span>
<div style="left:24.4px;top:83.23500000000001px;width:5px;height:1px;background:#c4c4c4"></div>
<div style="left:30.0px;top:80.43500000000002px;width:6.8px;height:6.8px;background:#fff;border:1px solid #b4b4b4"></div>
<svg style="position:absolute;left:38.5px;top:80.13500000000002px;" width="6.5" height="7.5" viewBox="0 0 6.5 7.5"><path d="M0.8 0.6H4L5.6 2.2V6.9H0.8Z" fill="#d4d4d4" stroke="#b0b0b0" stroke-width="0.6"/><path d="M1.8 2.6H3.6M1.8 3.9H4.6M1.8 5.2H4.6" stroke="#ececec" stroke-width="0.6"/></svg>
<span style="left:47.0px;top:81.79px;font-size:5.25px;color:#000;font-weight:400;">Barometric height serial output file:</span>
<div style="left:24.4px;top:90.84200000000001px;width:5px;height:1px;background:#c4c4c4"></div>
<svg style="position:absolute;left:30.7px;top:87.74200000000002px;" width="6.5" height="7.5" viewBox="0 0 6.5 7.5"><path d="M0.8 0.6H4L5.6 2.2V6.9H0.8Z" fill="#8c8c8c" stroke="#404040" stroke-width="0.6"/><path d="M4 0.6V2.2H5.6" fill="#e0e0e0" stroke="#404040" stroke-width="0.5"/><path d="M1.8 2.6H3.6M1.8 3.9H4.6M1.8 5.2H4.6" stroke="#d8d8d8" stroke-width="0.6"/></svg>
<span style="left:39.0px;top:89.40px;font-size:5.25px;color:#000;font-weight:400;">Data display and logging file: default_v1-0.qlk</span>
<div style="left:24.4px;top:98.44900000000001px;width:5px;height:1px;background:#c4c4c4"></div>
<div style="left:30.0px;top:95.64900000000002px;width:6.8px;height:6.8px;background:#fff;border:1px solid #b4b4b4"></div>
<svg style="position:absolute;left:38.5px;top:95.34900000000002px;" width="6.5" height="7.5" viewBox="0 0 6.5 7.5"><path d="M0.8 0.6H4L5.6 2.2V6.9H0.8Z" fill="#d4d4d4" stroke="#b0b0b0" stroke-width="0.6"/><path d="M1.8 2.6H3.6M1.8 3.9H4.6M1.8 5.2H4.6" stroke="#ececec" stroke-width="0.6"/></svg>
<span style="left:47.0px;top:97.00px;font-size:5.25px;color:#000;font-weight:400;">Data streaming definition file:</span>
<div style="left:24.4px;top:106.05600000000001px;width:5px;height:1px;background:#c4c4c4"></div>
<div style="left:30.0px;top:103.25600000000001px;width:6.8px;height:6.8px;background:#fff;border:1px solid #b4b4b4"></div>
<svg style="position:absolute;left:38.5px;top:102.95600000000002px;" width="6.5" height="7.5" viewBox="0 0 6.5 7.5"><path d="M0.8 0.6H4L5.6 2.2V6.9H0.8Z" fill="#d4d4d4" stroke="#b0b0b0" stroke-width="0.6"/><path d="M1.8 2.6H3.6M1.8 3.9H4.6M1.8 5.2H4.6" stroke="#ececec" stroke-width="0.6"/></svg>
<span style="left:47.0px;top:104.61px;font-size:5.25px;color:#000;font-weight:400;">NMEA logging file:</span>
<div style="left:24.4px;top:113.66300000000001px;width:5px;height:1px;background:#c4c4c4"></div>
<div style="left:30.0px;top:110.86300000000001px;width:6.8px;height:6.8px;background:#fff;border:1px solid #b4b4b4"></div>
<svg style="position:absolute;left:38.5px;top:110.56300000000002px;" width="6.5" height="7.5" viewBox="0 0 6.5 7.5"><path d="M0.8 0.6H4L5.6 2.2V6.9H0.8Z" fill="#d4d4d4" stroke="#b0b0b0" stroke-width="0.6"/><path d="M1.8 2.6H3.6M1.8 3.9H4.6M1.8 5.2H4.6" stroke="#ececec" stroke-width="0.6"/></svg>
<span style="left:47.0px;top:112.22px;font-size:5.25px;color:#000;font-weight:400;">NMEA output file:</span>
<div style="left:24.4px;top:121.27000000000001px;width:5px;height:1px;background:#c4c4c4"></div>
<div style="left:30.0px;top:118.47000000000001px;width:6.8px;height:6.8px;background:#fff;border:1px solid #b4b4b4"></div>
<svg style="position:absolute;left:38.5px;top:118.17000000000002px;" width="6.5" height="7.5" viewBox="0 0 6.5 7.5"><path d="M0.8 0.6H4L5.6 2.2V6.9H0.8Z" fill="#d4d4d4" stroke="#b0b0b0" stroke-width="0.6"/><path d="M1.8 2.6H3.6M1.8 3.9H4.6M1.8 5.2H4.6" stroke="#ececec" stroke-width="0.6"/></svg>
<span style="left:47.0px;top:119.83px;font-size:5.25px;color:#000;font-weight:400;">RTCM definition file:</span>
<div style="left:24.4px;top:128.877px;width:5px;height:1px;background:#c4c4c4"></div>
<div style="left:30.0px;top:126.07700000000001px;width:6.8px;height:6.8px;background:#fff;border:1px solid #b4b4b4"></div>
<svg style="position:absolute;left:38.5px;top:125.77700000000002px;" width="6.5" height="7.5" viewBox="0 0 6.5 7.5"><path d="M0.8 0.6H4L5.6 2.2V6.9H0.8Z" fill="#d4d4d4" stroke="#b0b0b0" stroke-width="0.6"/><path d="M1.8 2.6H3.6M1.8 3.9H4.6M1.8 5.2H4.6" stroke="#ececec" stroke-width="0.6"/></svg>
<span style="left:47.0px;top:127.43px;font-size:5.25px;color:#000;font-weight:400;">User actions file:</span>
<div style="left:24.4px;top:136.484px;width:5px;height:1px;background:#c4c4c4"></div>
<div style="left:30.0px;top:133.684px;width:6.8px;height:6.8px;background:#fff;border:1px solid #b4b4b4"></div>
<svg style="position:absolute;left:38.5px;top:133.38400000000001px;" width="6.5" height="7.5" viewBox="0 0 6.5 7.5"><path d="M0.8 0.6H4L5.6 2.2V6.9H0.8Z" fill="#d4d4d4" stroke="#b0b0b0" stroke-width="0.6"/><path d="M1.8 2.6H3.6M1.8 3.9H4.6M1.8 5.2H4.6" stroke="#ececec" stroke-width="0.6"/></svg>
<span style="left:47.0px;top:135.04px;font-size:5.25px;color:#000;font-weight:400;">User commands file:</span>
<div style="left:15.4px;top:144.091px;width:5px;height:1px;background:#c4c4c4"></div>
<div style="left:13.100000000000001px;top:141.991px;width:4.8px;height:5.2px;background:#fff;border:1px solid #c8c8c8"></div>
<div style="left:14.1px;top:144.241px;width:2.6px;height:1px;background:#707070"></div>
<svg style="position:absolute;left:21.2px;top:141.091px;" width="7" height="7" viewBox="0 0 7 7"><circle cx="3.3" cy="3.5" r="2.9" fill="#38e8f4" stroke="#90f4ff" stroke-width="0.5"/></svg>
<span style="left:30.0px;top:142.65px;font-size:5.25px;color:#000;font-weight:400;">Atmosphere</span>
<div style="left:24.4px;top:151.698px;width:5px;height:1px;background:#c4c4c4"></div>
<svg style="position:absolute;left:30.7px;top:148.598px;" width="6.5" height="7.5" viewBox="0 0 6.5 7.5"><path d="M0.8 0.6H4L5.6 2.2V6.9H0.8Z" fill="#8c8c8c" stroke="#404040" stroke-width="0.6"/><path d="M4 0.6V2.2H5.6" fill="#e0e0e0" stroke="#404040" stroke-width="0.5"/><path d="M1.8 2.6H3.6M1.8 3.9H4.6M1.8 5.2H4.6" stroke="#d8d8d8" stroke-width="0.6"/></svg>
<span style="left:39.0px;top:150.25px;font-size:5.25px;color:#000;font-weight:400;">Atmosphere file: ..\Shared\no_tropo_ion.atm</span>
<div style="left:15.4px;top:159.305px;width:5px;height:1px;background:#c4c4c4"></div>
<div style="left:13.100000000000001px;top:157.205px;width:4.8px;height:5.2px;background:#fff;border:1px solid #c8c8c8"></div>
<div style="left:14.1px;top:159.455px;width:2.6px;height:1px;background:#707070"></div>
<svg style="position:absolute;left:19.0px;top:157.305px;" width="10" height="5" viewBox="0 0 10 5"><rect x="0.6" y="0.9" width="3" height="3.2" rx="0.8" fill="#e8e800" stroke="#b0b000" stroke-width="0.4"/><rect x="3.9" y="1.8" width="2.2" height="1.5" fill="#606000"/><rect x="6.4" y="0.9" width="3" height="3.2" rx="0.8" fill="#e8e800" stroke="#b0b000" stroke-width="0.4"/></svg>
<span style="left:30.0px;top:157.86px;font-size:5.25px;color:#000;font-weight:400;">GLONASS constellation</span>
<div style="left:24.4px;top:166.912px;width:5px;height:1px;background:#c4c4c4"></div>
<svg style="position:absolute;left:30.7px;top:163.812px;" width="6.5" height="7.5" viewBox="0 0 6.5 7.5"><path d="M0.8 0.6H4L5.6 2.2V6.9H0.8Z" fill="#8c8c8c" stroke="#404040" stroke-width="0.6"/><path d="M4 0.6V2.2H5.6" fill="#e0e0e0" stroke="#404040" stroke-width="0.5"/><path d="M1.8 2.6H3.6M1.8 3.9H4.6M1.8 5.2H4.6" stroke="#d8d8d8" stroke-width="0.6"/></svg>
<span style="left:39.0px;top:165.47px;font-size:5.25px;color:#000;font-weight:400;">GLONASS signal sources file: glonass_p.glon</span>
<div style="left:24.4px;top:174.519px;width:5px;height:1px;background:#c4c4c4"></div>
<div style="left:30.0px;top:171.719px;width:6.8px;height:6.8px;background:#fff;border:1px solid #b4b4b4"></div>
<span style="left:39.6px;top:172.86px;font-size:6.2px;color:#000;font-weight:700;">?</span>
<span style="left:47.0px;top:173.07px;font-size:5.25px;color:#000;font-weight:400;">Enable Tx antenna patterns</span>
<div style="left:15.4px;top:182.12600000000003px;width:5px;height:1px;background:#c4c4c4"></div>
<div style="left:13.100000000000001px;top:180.02600000000004px;width:4.8px;height:5.2px;background:#fff;border:1px solid #c8c8c8"></div>
<div style="left:14.1px;top:182.27600000000004px;width:2.6px;height:1px;background:#707070"></div>
<svg style="position:absolute;left:19.0px;top:180.12600000000003px;" width="10" height="5" viewBox="0 0 10 5"><rect x="0.6" y="0.9" width="3" height="3.2" rx="0.8" fill="#e8e800" stroke="#b0b000" stroke-width="0.4"/><rect x="3.9" y="1.8" width="2.2" height="1.5" fill="#606000"/><rect x="6.4" y="0.9" width="3" height="3.2" rx="0.8" fill="#e8e800" stroke="#b0b000" stroke-width="0.4"/></svg>
<span style="left:30.0px;top:180.68px;font-size:5.25px;color:#000;font-weight:400;">GPS constellation</span>
<div style="left:24.4px;top:189.733px;width:5px;height:1px;background:#c4c4c4"></div>
<svg style="position:absolute;left:30.7px;top:186.633px;" width="6.5" height="7.5" viewBox="0 0 6.5 7.5"><path d="M0.8 0.6H4L5.6 2.2V6.9H0.8Z" fill="#8c8c8c" stroke="#404040" stroke-width="0.6"/><path d="M4 0.6V2.2H5.6" fill="#e0e0e0" stroke="#404040" stroke-width="0.5"/><path d="M1.8 2.6H3.6M1.8 3.9H4.6M1.8 5.2H4.6" stroke="#d8d8d8" stroke-width="0.6"/></svg>
<span style="left:39.0px;top:188.29px;font-size:5.25px;color:#000;font-weight:400;">GPS signal sources file: ..\Shared\all_10+L2C.gps</span>
<div style="left:24.4px;top:197.34000000000003px;width:5px;height:1px;background:#c4c4c4"></div>
<div style="left:30.0px;top:194.54000000000002px;width:6.8px;height:6.8px;background:#fff;border:1px solid #b4b4b4"></div>
<span style="left:39.6px;top:195.68px;font-size:6.2px;color:#000;font-weight:700;">?</span>
<span style="left:47.0px;top:195.90px;font-size:5.25px;color:#000;font-weight:400;">Enable Tx antenna patterns</span>
<div style="left:24.4px;top:204.947px;width:5px;height:1px;background:#c4c4c4"></div>
<div style="left:30.0px;top:202.147px;width:6.8px;height:6.8px;background:#fff;border:1px solid #b4b4b4"></div>
<span style="left:39.6px;top:203.29px;font-size:6.2px;color:#000;font-weight:700;">?</span>
<span style="left:47.0px;top:203.50px;font-size:5.25px;color:#000;font-weight:400;">Enable user-defined data</span>
<div style="left:15.4px;top:212.55400000000003px;width:5px;height:1px;background:#c4c4c4"></div>
<div style="left:13.100000000000001px;top:210.45400000000004px;width:4.8px;height:5.2px;background:#fff;border:1px solid #c8c8c8"></div>
<div style="left:14.1px;top:212.70400000000004px;width:2.6px;height:1px;background:#707070"></div>
<svg style="position:absolute;left:19.0px;top:210.55400000000003px;" width="10" height="5" viewBox="0 0 10 5"><rect x="0.6" y="0.9" width="3" height="3.2" rx="0.8" fill="#e8e800" stroke="#b0b000" stroke-width="0.4"/><rect x="3.9" y="1.8" width="2.2" height="1.5" fill="#606000"/><rect x="6.4" y="0.9" width="3" height="3.2" rx="0.8" fill="#e8e800" stroke="#b0b000" stroke-width="0.4"/></svg>
<div style="left:29.0px;top:209.55400000000003px;width:48px;height:7.2px;background:#D4D0C8"></div>
<span style="left:30.0px;top:211.11px;font-size:5.25px;color:#000;font-weight:400;">EGNOS constellation</span>
<div style="left:24.4px;top:220.161px;width:5px;height:1px;background:#c4c4c4"></div>
<svg style="position:absolute;left:30.7px;top:217.061px;" width="6.5" height="7.5" viewBox="0 0 6.5 7.5"><path d="M0.8 0.6H4L5.6 2.2V6.9H0.8Z" fill="#8c8c8c" stroke="#404040" stroke-width="0.6"/><path d="M4 0.6V2.2H5.6" fill="#e0e0e0" stroke="#404040" stroke-width="0.5"/><path d="M1.8 2.6H3.6M1.8 3.9H4.6M1.8 5.2H4.6" stroke="#d8d8d8" stroke-width="0.6"/></svg>
<span style="left:39.0px;top:218.72px;font-size:5.25px;color:#000;font-weight:400;">EGNOS signal sources file: ..\Shared\egnos_3th_sat.sbe</span>
<div style="left:24.4px;top:227.76800000000003px;width:5px;height:1px;background:#c4c4c4"></div>
<div style="left:30.0px;top:224.96800000000002px;width:6.8px;height:6.8px;background:#fff;border:1px solid #b4b4b4"></div>
<span style="left:39.6px;top:226.11px;font-size:6.2px;color:#000;font-weight:700;">?</span>
<span style="left:47.0px;top:226.32px;font-size:5.25px;color:#000;font-weight:400;">Enable Tx antenna patterns</span>
<div style="left:15.4px;top:235.375px;width:5px;height:1px;background:#c4c4c4"></div>
<div style="left:13.100000000000001px;top:233.275px;width:4.8px;height:5.2px;background:#fff;border:1px solid #c8c8c8"></div>
<div style="left:14.1px;top:235.525px;width:2.6px;height:1px;background:#707070"></div>
<div style="left:14.9px;top:234.375px;width:1px;height:3px;background:#606060"></div>
<svg style="position:absolute;left:19.0px;top:233.375px;" width="10" height="5" viewBox="0 0 10 5"><rect x="0.6" y="0.9" width="3" height="3.2" rx="0.8" fill="#e8e800" stroke="#b0b000" stroke-width="0.4"/><rect x="3.9" y="1.8" width="2.2" height="1.5" fill="#606000"/><rect x="6.4" y="0.9" width="3" height="3.2" rx="0.8" fill="#e8e800" stroke="#b0b000" stroke-width="0.4"/></svg>
<span style="left:30.0px;top:233.93px;font-size:5.25px;color:#000;font-weight:400;">WAAS constellation</span>
<div style="left:15.4px;top:242.98200000000003px;width:5px;height:1px;background:#c4c4c4"></div>
<div style="left:13.100000000000001px;top:240.88200000000003px;width:4.8px;height:5.2px;background:#fff;border:1px solid #c8c8c8"></div>
<div style="left:14.1px;top:243.13200000000003px;width:2.6px;height:1px;background:#707070"></div>
<div style="left:14.9px;top:241.98200000000003px;width:1px;height:3px;background:#606060"></div>
<svg style="position:absolute;left:19.0px;top:240.98200000000003px;" width="10" height="5" viewBox="0 0 10 5"><rect x="0.6" y="0.9" width="3" height="3.2" rx="0.8" fill="#e8e800" stroke="#b0b000" stroke-width="0.4"/><rect x="3.9" y="1.8" width="2.2" height="1.5" fill="#606000"/><rect x="6.4" y="0.9" width="3" height="3.2" rx="0.8" fill="#e8e800" stroke="#b0b000" stroke-width="0.4"/></svg>
<span style="left:30.0px;top:241.54px;font-size:5.25px;color:#000;font-weight:400;">MSAS constellation</span>
<div style="left:15.4px;top:250.589px;width:5px;height:1px;background:#c4c4c4"></div>
<div style="left:13.100000000000001px;top:248.489px;width:4.8px;height:5.2px;background:#fff;border:1px solid #c8c8c8"></div>
<div style="left:14.1px;top:250.739px;width:2.6px;height:1px;background:#707070"></div>
<svg style="position:absolute;left:21.2px;top:247.589px;" width="8" height="7" viewBox="0 0 8 7"><path d="M4 0.6L7.4 6.5H0.6Z" fill="none" stroke="#222" stroke-width="0.9"/><path d="M4 3V5" stroke="#222" stroke-width="0.8"/></svg>
<span style="left:30.0px;top:249.14px;font-size:5.25px;color:#000;font-weight:400;">Vehicle 1</span>
<div style="left:24.4px;top:258.196px;width:5px;height:1px;background:#c4c4c4"></div>
<div style="left:22.099999999999998px;top:256.096px;width:4.8px;height:5.2px;background:#fff;border:1px solid #c8c8c8"></div>
<div style="left:23.099999999999998px;top:258.346px;width:2.6px;height:1px;background:#707070"></div>
<div style="left:31.7px;top:258.196px;width:3px;height:1px;background:#222"></div>
<div style="left:32.7px;top:257.196px;width:1px;height:3px;background:#222"></div>
<span style="left:39.0px;top:256.75px;font-size:5.25px;color:#000;font-weight:400;">Motion</span>
<div style="left:33.4px;top:265.803px;width:5px;height:1px;background:#c4c4c4"></div>
<svg style="position:absolute;left:39.699999999999996px;top:262.703px;" width="6.5" height="7.5" viewBox="0 0 6.5 7.5"><path d="M0.8 0.6H4L5.6 2.2V6.9H0.8Z" fill="#8c8c8c" stroke="#404040" stroke-width="0.6"/><path d="M4 0.6V2.2H5.6" fill="#e0e0e0" stroke="#404040" stroke-width="0.5"/><path d="M1.8 2.6H3.6M1.8 3.9H4.6M1.8 5.2H4.6" stroke="#d8d8d8" stroke-width="0.6"/></svg>
<span style="left:48.0px;top:264.36px;font-size:5.25px;color:#000;font-weight:400;">Initial reference file: position.ref</span>
<div style="left:24.4px;top:273.41px;width:5px;height:1px;background:#c4c4c4"></div>
<div style="left:22.099999999999998px;top:271.31px;width:4.8px;height:5.2px;background:#fff;border:1px solid #c8c8c8"></div>
<div style="left:23.099999999999998px;top:273.56px;width:2.6px;height:1px;background:#707070"></div>
<div style="left:31.7px;top:273.41px;width:3px;height:1px;background:#222"></div>
<div style="left:32.7px;top:272.41px;width:1px;height:3px;background:#222"></div>
<span style="left:39.0px;top:271.97px;font-size:5.25px;color:#000;font-weight:400;">Aiding</span>
<div style="left:33.4px;top:281.017px;width:5px;height:1px;background:#c4c4c4"></div>
<div style="left:39.0px;top:278.217px;width:6.8px;height:6.8px;background:#fff;border:1px solid #b4b4b4"></div>
<svg style="position:absolute;left:47.5px;top:277.917px;" width="6.5" height="7.5" viewBox="0 0 6.5 7.5"><path d="M0.8 0.6H4L5.6 2.2V6.9H0.8Z" fill="#d4d4d4" stroke="#b0b0b0" stroke-width="0.6"/><path d="M1.8 2.6H3.6M1.8 3.9H4.6M1.8 5.2H4.6" stroke="#ececec" stroke-width="0.6"/></svg>
<span style="left:56.0px;top:279.57px;font-size:5.25px;color:#000;font-weight:400;">INS model file:</span>
<div style="left:33.4px;top:288.624px;width:5px;height:1px;background:#c4c4c4"></div>
<div style="left:39.0px;top:285.824px;width:6.8px;height:6.8px;background:#fff;border:1px solid #b4b4b4"></div>
<svg style="position:absolute;left:47.5px;top:285.524px;" width="6.5" height="7.5" viewBox="0 0 6.5 7.5"><path d="M0.8 0.6H4L5.6 2.2V6.9H0.8Z" fill="#d4d4d4" stroke="#b0b0b0" stroke-width="0.6"/><path d="M1.8 2.6H3.6M1.8 3.9H4.6M1.8 5.2H4.6" stroke="#ececec" stroke-width="0.6"/></svg>
<span style="left:56.0px;top:287.18px;font-size:5.25px;color:#000;font-weight:400;">INS model file:</span>
<div style="left:33.4px;top:296.231px;width:5px;height:1px;background:#c4c4c4"></div>
<div style="left:39.0px;top:293.431px;width:6.8px;height:6.8px;background:#fff;border:1px solid #b4b4b4"></div>
<svg style="position:absolute;left:47.5px;top:293.131px;" width="6.5" height="7.5" viewBox="0 0 6.5 7.5"><path d="M0.8 0.6H4L5.6 2.2V6.9H0.8Z" fill="#d4d4d4" stroke="#b0b0b0" stroke-width="0.6"/><path d="M1.8 2.6H3.6M1.8 3.9H4.6M1.8 5.2H4.6" stroke="#ececec" stroke-width="0.6"/></svg>
<span style="left:56.0px;top:294.79px;font-size:5.25px;color:#000;font-weight:400;">INS model file:</span>
<div style="left:33.4px;top:303.838px;width:5px;height:1px;background:#c4c4c4"></div>
<div style="left:39.0px;top:301.038px;width:6.8px;height:6.8px;background:#fff;border:1px solid #b4b4b4"></div>
<svg style="position:absolute;left:47.5px;top:300.738px;" width="6.5" height="7.5" viewBox="0 0 6.5 7.5"><path d="M0.8 0.6H4L5.6 2.2V6.9H0.8Z" fill="#d4d4d4" stroke="#b0b0b0" stroke-width="0.6"/><path d="M1.8 2.6H3.6M1.8 3.9H4.6M1.8 5.2H4.6" stroke="#ececec" stroke-width="0.6"/></svg>
<span style="left:56.0px;top:302.39px;font-size:5.25px;color:#000;font-weight:400;">INS model file:</span>
<div style="left:24.4px;top:311.445px;width:5px;height:1px;background:#c4c4c4"></div>
<div style="left:22.099999999999998px;top:309.34499999999997px;width:4.8px;height:5.2px;background:#fff;border:1px solid #c8c8c8"></div>
<div style="left:23.099999999999998px;top:311.59499999999997px;width:2.6px;height:1px;background:#707070"></div>
<div style="left:31.7px;top:311.445px;width:3px;height:1px;background:#222"></div>
<div style="left:32.7px;top:310.445px;width:1px;height:3px;background:#222"></div>
<span style="left:39.0px;top:310.00px;font-size:5.25px;color:#000;font-weight:400;">Options</span>
<div style="left:33.4px;top:319.052px;width:5px;height:1px;background:#c4c4c4"></div>
<div style="left:39.0px;top:316.252px;width:6.8px;height:6.8px;background:#fff;border:1px solid #b4b4b4"></div>
<svg style="position:absolute;left:47.5px;top:315.952px;" width="6.5" height="7.5" viewBox="0 0 6.5 7.5"><path d="M0.8 0.6H4L5.6 2.2V6.9H0.8Z" fill="#d4d4d4" stroke="#b0b0b0" stroke-width="0.6"/><path d="M1.8 2.6H3.6M1.8 3.9H4.6M1.8 5.2H4.6" stroke="#ececec" stroke-width="0.6"/></svg>
<span style="left:56.0px;top:317.61px;font-size:5.25px;color:#000;font-weight:400;">G-sensitivity file:</span>
<div style="left:33.4px;top:326.659px;width:5px;height:1px;background:#c4c4c4"></div>
<div style="left:39.0px;top:323.859px;width:6.8px;height:6.8px;background:#fff;border:1px solid #b4b4b4"></div>
<svg style="position:absolute;left:47.5px;top:323.55899999999997px;" width="6.5" height="7.5" viewBox="0 0 6.5 7.5"><path d="M0.8 0.6H4L5.6 2.2V6.9H0.8Z" fill="#d4d4d4" stroke="#b0b0b0" stroke-width="0.6"/><path d="M1.8 2.6H3.6M1.8 3.9H4.6M1.8 5.2H4.6" stroke="#ececec" stroke-width="0.6"/></svg>
<span style="left:56.0px;top:325.21px;font-size:5.25px;color:#000;font-weight:400;">Vertical plane file:</span>
<div style="left:33.4px;top:334.266px;width:5px;height:1px;background:#c4c4c4"></div>
<div style="left:39.0px;top:331.466px;width:6.8px;height:6.8px;background:#fff;border:1px solid #b4b4b4"></div>
<svg style="position:absolute;left:47.5px;top:331.166px;" width="6.5" height="7.5" viewBox="0 0 6.5 7.5"><path d="M0.8 0.6H4L5.6 2.2V6.9H0.8Z" fill="#d4d4d4" stroke="#b0b0b0" stroke-width="0.6"/><path d="M1.8 2.6H3.6M1.8 3.9H4.6M1.8 5.2H4.6" stroke="#ececec" stroke-width="0.6"/></svg>
<span style="left:56.0px;top:332.82px;font-size:5.25px;color:#000;font-weight:400;">Land mobile multipath file:</span>
<div style="left:24.4px;top:341.873px;width:5px;height:1px;background:#c4c4c4"></div>
<div style="left:22.099999999999998px;top:339.77299999999997px;width:4.8px;height:5.2px;background:#fff;border:1px solid #c8c8c8"></div>
<div style="left:23.099999999999998px;top:342.02299999999997px;width:2.6px;height:1px;background:#707070"></div>
<svg style="position:absolute;left:30.2px;top:338.873px;" width="8" height="7.5" viewBox="0 0 8 7.5"><path d="M0.8 0.5L4 3.5L7.2 0.5M4 0.5V7" fill="none" stroke="#111" stroke-width="0.9"/></svg>
<span style="left:39.0px;top:340.43px;font-size:5.25px;color:#000;font-weight:400;">Antenna  1</span>
<div style="left:33.4px;top:349.48px;width:5px;height:1px;background:#c4c4c4"></div>
<svg style="position:absolute;left:39.199999999999996px;top:346.48px;" width="8" height="7" viewBox="0 0 8 7"><path d="M4 0V7M1 1.5L3 3M7 1.5L5 3M0.5 4H2.5M5.5 4H7.5" stroke="#a0a000" stroke-width="0.9"/><path d="M4 1V6" stroke="#111" stroke-width="0.7"/></svg>
<span style="left:48.0px;top:348.04px;font-size:5.25px;color:#000;font-weight:400;">Signal types: GPS L1+L2, WAAS L1, EGNOS L1, MSAS L1</span>
<div style="left:33.4px;top:357.087px;width:5px;height:1px;background:#c4c4c4"></div>
<div style="left:31.099999999999998px;top:354.98699999999997px;width:4.8px;height:5.2px;background:#fff;border:1px solid #c8c8c8"></div>
<div style="left:32.1px;top:357.23699999999997px;width:2.6px;height:1px;background:#707070"></div>
<div style="left:40.699999999999996px;top:357.087px;width:3px;height:1px;background:#222"></div>
<div style="left:41.699999999999996px;top:356.087px;width:1px;height:3px;background:#222"></div>
<span style="left:48.0px;top:355.64px;font-size:5.25px;color:#000;font-weight:400;">Options</span>
<div style="left:42.4px;top:364.694px;width:5px;height:1px;background:#c4c4c4"></div>
<svg style="position:absolute;left:48.699999999999996px;top:361.594px;" width="6.5" height="7.5" viewBox="0 0 6.5 7.5"><path d="M0.8 0.6H4L5.6 2.2V6.9H0.8Z" fill="#8c8c8c" stroke="#404040" stroke-width="0.6"/><path d="M4 0.6V2.2H5.6" fill="#e0e0e0" stroke="#404040" stroke-width="0.5"/><path d="M1.8 2.6H3.6M1.8 3.9H4.6M1.8 5.2H4.6" stroke="#d8d8d8" stroke-width="0.6"/></svg>
<span style="left:57.0px;top:363.25px;font-size:5.25px;color:#000;font-weight:400;">Offsets file: default_v1-0.aof</span>
<div style="left:42.4px;top:372.301px;width:5px;height:1px;background:#c4c4c4"></div>
<div style="left:48.0px;top:369.501px;width:6.8px;height:6.8px;background:#fff;border:1px solid #b4b4b4"></div>
<svg style="position:absolute;left:56.5px;top:369.20099999999996px;" width="6.5" height="7.5" viewBox="0 0 6.5 7.5"><path d="M0.8 0.6H4L5.6 2.2V6.9H0.8Z" fill="#d4d4d4" stroke="#b0b0b0" stroke-width="0.6"/><path d="M1.8 2.6H3.6M1.8 3.9H4.6M1.8 5.2H4.6" stroke="#ececec" stroke-width="0.6"/></svg>
<span style="left:65.0px;top:370.86px;font-size:5.25px;color:#000;font-weight:400;">Receiver clock model file:</span>
<div style="left:42.4px;top:379.908px;width:5px;height:1px;background:#c4c4c4"></div>
<div style="left:48.0px;top:377.108px;width:6.8px;height:6.8px;background:#fff;border:1px solid #b4b4b4"></div>
<svg style="position:absolute;left:56.0px;top:376.908px;" width="8" height="7" viewBox="0 0 8 7"><path d="M0.5 1L3 4L5 2L7.5 4.5" fill="none" stroke="#e02020" stroke-width="1"/><rect x="0.5" y="5" width="7" height="1.6" fill="#c03030"/></svg>
<span style="left:65.0px;top:378.46px;font-size:5.25px;color:#000;font-weight:400;">Enable reflection pattern multipath</span>
<div style="left:33.4px;top:387.515px;width:5px;height:1px;background:#c4c4c4"></div>
<div style="left:31.099999999999998px;top:385.41499999999996px;width:4.8px;height:5.2px;background:#fff;border:1px solid #c8c8c8"></div>
<div style="left:32.1px;top:387.66499999999996px;width:2.6px;height:1px;background:#707070"></div>
<svg style="position:absolute;left:39.199999999999996px;top:384.515px;" width="8" height="7.5" viewBox="0 0 8 7.5"><path d="M0.8 0.5L4 3.5L7.2 0.5M4 0.5V7" fill="none" stroke="#111" stroke-width="0.9"/></svg>
<span style="left:48.0px;top:386.07px;font-size:5.25px;color:#000;font-weight:400;">Antenna pattern control</span>
<div style="left:42.4px;top:395.122px;width:5px;height:1px;background:#c4c4c4"></div>
<div style="left:48.0px;top:392.322px;width:6.8px;height:6.8px;background:#fff;border:1px solid #b4b4b4"></div>
<span style="left:57.6px;top:393.47px;font-size:6.2px;color:#000;font-weight:700;">?</span>
<span style="left:65.0px;top:393.68px;font-size:5.25px;color:#000;font-weight:400;">Enable level patterns</span>
<div style="left:42.4px;top:402.729px;width:5px;height:1px;background:#c4c4c4"></div>
<div style="left:48.0px;top:399.929px;width:6.8px;height:6.8px;background:#fff;border:1px solid #b4b4b4"></div>
<span style="left:57.6px;top:401.07px;font-size:6.2px;color:#000;font-weight:700;">?</span>
<span style="left:65.0px;top:401.28px;font-size:5.25px;color:#000;font-weight:400;">Enable phase patterns</span>
<div style="left:42.4px;top:410.336px;width:5px;height:1px;background:#c4c4c4"></div>
<div style="left:48.0px;top:407.536px;width:6.8px;height:6.8px;background:#fff;border:1px solid #b4b4b4"></div>
<svg style="position:absolute;left:56.5px;top:407.236px;" width="6.5" height="7.5" viewBox="0 0 6.5 7.5"><path d="M0.8 0.6H4L5.6 2.2V6.9H0.8Z" fill="#d4d4d4" stroke="#b0b0b0" stroke-width="0.6"/><path d="M1.8 2.6H3.6M1.8 3.9H4.6M1.8 5.2H4.6" stroke="#ececec" stroke-width="0.6"/></svg>
<span style="left:65.0px;top:408.89px;font-size:5.25px;color:#000;font-weight:400;">Switching file:</span>
<div style="left:5px;top:445px;width:27.5px;height:11px;background:#D4D0C8;box-shadow:inset -1px -1px #404040,inset 1px 1px #fff,inset -2px -2px #808080;"></div>
<span style="left:-81.25px;width:200px;text-align:center;top:448.62px;font-size:5.2px;color:#a0a0a0;font-weight:400;text-shadow:0.6px 0.6px #fff;">View...</span>
<div style="left:36px;top:445px;width:27.5px;height:11px;background:#D4D0C8;box-shadow:inset -1px -1px #404040,inset 1px 1px #fff,inset -2px -2px #808080;"></div>
<span style="left:-50.25px;width:200px;text-align:center;top:448.62px;font-size:5.2px;color:#a0a0a0;font-weight:400;text-shadow:0.6px 0.6px #fff;">Select...</span>
<div style="left:67px;top:445px;width:27.5px;height:11px;background:#D4D0C8;box-shadow:inset -1px -1px #404040,inset 1px 1px #fff,inset -2px -2px #808080;"></div>
<span style="left:-19.25px;width:200px;text-align:center;top:448.62px;font-size:5.2px;color:#a0a0a0;font-weight:400;text-shadow:0.6px 0.6px #fff;">Enable</span>
<div style="left:98px;top:445px;width:27.5px;height:11px;background:#D4D0C8;box-shadow:inset -1px -1px #404040,inset 1px 1px #fff,inset -2px -2px #808080;"></div>
<span style="left:11.75px;width:200px;text-align:center;top:448.62px;font-size:5.2px;color:#a0a0a0;font-weight:400;text-shadow:0.6px 0.6px #fff;">Delete</span>
<div style="left:129px;top:445px;width:27.5px;height:11px;background:#D4D0C8;box-shadow:inset -1px -1px #404040,inset 1px 1px #fff,inset -2px -2px #808080;"></div>
<span style="left:42.75px;width:200px;text-align:center;top:448.62px;font-size:5.2px;color:#a0a0a0;font-weight:400;text-shadow:0.6px 0.6px #fff;">New...</span>
<div style="left:5px;top:460px;width:27.5px;height:11px;background:#D4D0C8;box-shadow:inset -1px -1px #404040,inset 1px 1px #fff,inset -2px -2px #808080;"></div>
<span style="left:-81.25px;width:200px;text-align:center;top:463.62px;font-size:5.2px;color:#a0a0a0;font-weight:400;text-shadow:0.6px 0.6px #fff;">Label...</span>
<div style="left:36px;top:460px;width:27.5px;height:11px;background:#D4D0C8;box-shadow:inset -1px -1px #404040,inset 1px 1px #fff,inset -2px -2px #808080;"></div>
<span style="left:-50.25px;width:200px;text-align:center;top:463.62px;font-size:5.2px;color:#a0a0a0;font-weight:400;text-shadow:0.6px 0.6px #fff;">Print...</span>
<div style="left:67px;top:460px;width:27.5px;height:11px;background:#D4D0C8;box-shadow:inset -1px -1px #404040,inset 1px 1px #fff,inset -2px -2px #808080;"></div>
<span style="left:-19.25px;width:200px;text-align:center;top:463.62px;font-size:5.2px;color:#a0a0a0;font-weight:400;text-shadow:0.6px 0.6px #fff;">Expand</span>
<div style="left:98px;top:460px;width:27.5px;height:11px;background:#D4D0C8;box-shadow:inset -1px -1px #404040,inset 1px 1px #fff,inset -2px -2px #808080;"></div>
<span style="left:11.75px;width:200px;text-align:center;top:463.62px;font-size:5.2px;color:#000;font-weight:400;">Help</span>
<div style="left:0px;top:476px;width:800px;height:11px;background:#D4D0C8"></div>
<div style="left:0px;top:476.5px;width:800px;height:1px;background:#fff"></div>
<span style="left:1px;top:479.95px;font-size:5.4px;color:#000;font-weight:400;">Ready</span>
<div style="left:482px;top:477.5px;width:55px;height:8.5px;background:#D4D0C8;box-shadow:inset 1px 1px #808080,inset -1px -1px #fff;"></div>
<span style="left:484px;top:479.95px;font-size:5.4px;color:#000;font-weight:400;">08-Jan-2012 01:38:36</span>
<div style="left:538px;top:477.5px;width:136px;height:8.5px;background:#D4D0C8;box-shadow:inset 1px 1px #808080,inset -1px -1px #fff;"></div>
<div style="left:540px;top:478.5px;width:3px;height:6.5px;background:#0A246A"></div>
<div style="left:674.5px;top:477.5px;width:22px;height:8.5px;background:#D4D0C8;box-shadow:inset 1px 1px #808080,inset -1px -1px #fff;"></div>
<span style="left:676.5px;top:480.02px;font-size:5.2px;color:#a0a0a0;font-weight:400;text-shadow:0.5px 0.5px #fff">LOCKED</span>
<div style="left:697px;top:478px;width:12.5px;height:8px;background:#00ff00"></div>
<span style="left:603.25px;width:200px;text-align:center;top:479.95px;font-size:5.4px;color:#000;font-weight:400;">LOG</span>
<div style="left:711px;top:478px;width:12px;height:8px;background:#00ff00"></div>
<span style="left:617.0px;width:200px;text-align:center;top:479.95px;font-size:5.4px;color:#000;font-weight:400;">H/W</span>
<div style="left:724.5px;top:478px;width:41.5px;height:8px;background:#00ff00"></div>
<span style="left:645.25px;width:200px;text-align:center;top:479.95px;font-size:5.4px;color:#000;font-weight:400;">Compatible h/w</span>
<div style="left:767.5px;top:478px;width:32.5px;height:8px;background:#00ff00"></div>
<span style="left:683.75px;width:200px;text-align:center;top:479.95px;font-size:5.4px;color:#000;font-weight:400;">Running</span>
<div style="left:0px;top:486.5px;width:800px;height:13.5px;background:#D4D0C8"></div>
<div style="left:0px;top:486.5px;width:800px;height:1px;background:#fff"></div>
<div style="left:1px;top:488px;width:25.5px;height:11px;background:#D4D0C8;box-shadow:inset -1px -1px #404040,inset 1px 1px #fff,inset -2px -2px #808080;"></div>
<div style="left:3px;top:490.5px;width:6px;height:6px;background:conic-gradient(#f03a1a 0 25%,#40b040 0 50%,#f0c000 0 75%,#2060e0 0)"></div>
<span style="left:10px;top:491.42px;font-size:6px;color:#000;font-weight:700;">Start</span>
<div style="left:29px;top:488.5px;width:1px;height:10px;background:#808080"></div>
<div style="left:30px;top:488.5px;width:1px;height:10px;background:#fff"></div>
<div style="left:35px;top:489.5px;width:8px;height:8px;background:radial-gradient(#60c0ff,#0050d0);border-radius:50%"></div>
<div style="left:45.5px;top:489.5px;width:8px;height:8px;background:#1f5fb0;border:1px solid #0a3070"></div>
<div style="left:56px;top:489.5px;width:8px;height:8px;background:radial-gradient(#d0f0ff,#3080c0);border-radius:50%"></div>
<div style="left:68px;top:488.5px;width:1px;height:10px;background:#808080"></div>
<div style="left:69px;top:488.5px;width:1px;height:10px;background:#fff"></div>
<div style="left:71px;top:487.5px;width:76.5px;height:12px;background:#e8e6e2;box-shadow:inset 1px 1px #404040,inset -1px -1px #fff,inset 2px 2px #808080"></div>
<div style="left:73.5px;top:490px;width:8px;height:7.5px;background:linear-gradient(135deg,#2040c0,#40a040 50%,#e03030)"></div>
<span style="left:83px;top:491.50px;font-size:5.8px;color:#000;font-weight:700;">SimGEN - Static.scn</span>
<div style="left:710px;top:488.5px;width:1px;height:10px;background:#808080"></div>
<div style="left:711px;top:488.5px;width:1px;height:10px;background:#fff"></div>
<div style="left:713px;top:489.5px;width:9.5px;height:8px;background:#1a3a8a"></div>
<span style="left:617.7px;width:200px;text-align:center;top:491.70px;font-size:5px;color:#fff;font-weight:700;">EN</span>
<div style="left:726px;top:488.5px;width:74px;height:11px;background:#D4D0C8;box-shadow:inset 1px 1px #808080,inset -1px -1px #fff;"></div>
<svg style="position:absolute;left:726px;top:488px;" width="56" height="12" viewBox="0 0 56 12"><rect x="2.5" y="2" width="6" height="6.5" fill="#606060" stroke="#303030" stroke-width="0.8"/><rect x="4.3" y="3.8" width="2.4" height="2.6" fill="#d0d0d0"/><circle cx="13.5" cy="5.2" r="3.2" fill="#7a8090"/><path d="M12 4.5L15 6" stroke="#c0c8d0" stroke-width="0.8"/><path d="M19 3.5H20.5L23 1.5V9L20.5 7H19Z" fill="#d04020"/><path d="M23.5 3V7.5" stroke="#e08060" stroke-width="0.8"/><rect x="27.5" y="1.5" width="6.5" height="7.5" fill="#202020"/><path d="M29 3H32.5M29 5H32.5" stroke="#40c0d0" stroke-width="0.9"/><path d="M36 5.5Q39 2 42.5 4V8H37Z" fill="#80c040"/><path d="M44 8L47.5 1.5L51 7Z" fill="#f0c020"/><path d="M45 8.5L48 6" stroke="#3050c0" stroke-width="1"/></svg>
<span style="left:781.5px;top:491.87px;font-size:5.6px;color:#000;font-weight:400;">12:03</span>
<div style="left:147px;top:221px;width:539.5px;height:235.5px;background:#D4D0C8;box-shadow:inset 1px 1px #D4D0C8,inset -1px -1px #404040,inset 2px 2px #fff,inset -2px -2px #808080"></div>
<div style="left:148.5px;top:222px;width:536.0px;height:9px;background:linear-gradient(90deg,#0A246A,#A6CAF0)"></div>
<span style="left:149.5px;top:224.36px;font-size:5.9px;color:#fff;font-weight:700;">Manual multipath settings</span>
<div style="left:676.5px;top:223.5px;width:8px;height:7px;background:#D4D0C8;box-shadow:inset -1px -1px #404040,inset 1px 1px #fff,inset -2px -2px #808080;"></div>
<svg style="position:absolute;left:676.5px;top:223.5px;" width="8" height="7" viewBox="0 0 8 7"><path d="M2.5 1.8L5.5 4.8M5.5 1.8L2.5 4.8" stroke="#000" stroke-width="1"/></svg>
<div style="left:151.5px;top:234.5px;width:531.5px;height:17px;box-shadow:inset 1px 1px #909090,inset -1px -1px #a8a8a8,1px 1px #f4f4f4;"></div>
<span style="left:153px;top:241.02px;font-size:5.2px;color:#000;font-weight:400;">GPS SVID 9</span>
<span style="left:202px;top:241.02px;font-size:5.2px;color:#000;font-weight:400;">Multipath type</span>
<div style="left:238px;top:239px;width:51px;height:9px;background:#fff;box-shadow:inset 1px 1px #808080,inset -1px -1px #fff,inset 2px 2px #404040;"></div>
<span style="left:240.5px;top:241.32px;font-size:5.2px;color:#000;font-weight:400;">Polynomial</span>
<div style="left:282px;top:240px;width:6.5px;height:7px;background:#D4D0C8;box-shadow:inset -1px -1px #404040,inset 1px 1px #fff,inset -2px -2px #808080;"></div>
<svg style="position:absolute;left:283.5px;top:242.5px" width="4" height="3"><path d="M0 0.3H3.6L1.8 2.5Z" fill="#000"/></svg>
<div style="left:151.5px;top:252px;width:531.5px;height:16.5px;box-shadow:inset 1px 1px #909090,inset -1px -1px #a8a8a8,1px 1px #f4f4f4;"></div>
<span style="left:153px;top:257.52px;font-size:5.2px;color:#000;font-weight:400;">Number of echos 1</span>
<div style="left:204px;top:254px;width:16px;height:11px;background:#D4D0C8;box-shadow:inset -1px -1px #404040,inset 1px 1px #fff,inset -2px -2px #808080;"></div>
<span style="left:112px;width:200px;text-align:center;top:257.52px;font-size:5.2px;color:#000;font-weight:400;">Add</span>
<div style="left:224px;top:254px;width:24.5px;height:11px;background:#D4D0C8;box-shadow:inset -1px -1px #404040,inset 1px 1px #fff,inset -2px -2px #808080;"></div>
<span style="left:136.3px;width:200px;text-align:center;top:257.52px;font-size:5.2px;color:#000;font-weight:400;">Remove</span>
<span style="left:257px;top:257.52px;font-size:5.2px;color:#000;font-weight:400;">Remove LOS</span>
<div style="left:290px;top:256px;width:6.5px;height:6.5px;background:#fff;box-shadow:inset 1px 1px #808080,inset -1px -1px #fff,inset 2px 2px #404040;"></div>
<div style="left:151.5px;top:269px;width:531.5px;height:165px;box-shadow:inset 1px 1px #909090,inset -1px -1px #a8a8a8,1px 1px #f4f4f4;"></div>
<div style="left:154px;top:272px;width:21.5px;height:8.5px;background:#D4D0C8;box-shadow:inset -1px -1px #404040,inset 1px 1px #fff,inset -2px -2px #808080;"></div>
<span style="left:64.75px;width:200px;text-align:center;top:274.32px;font-size:5.2px;color:#000;font-weight:400;">Echo #</span>
<div style="left:176.5px;top:272px;width:44px;height:8.5px;background:#D4D0C8;box-shadow:inset -1px -1px #404040,inset 1px 1px #fff,inset -2px -2px #808080;"></div>
<span style="left:98.5px;width:200px;text-align:center;top:274.32px;font-size:5.2px;color:#000;font-weight:400;">Forced channel</span>
<div style="left:221.5px;top:272px;width:37px;height:8.5px;background:#D4D0C8;box-shadow:inset -1px -1px #404040,inset 1px 1px #fff,inset -2px -2px #808080;"></div>
<span style="left:140.0px;width:200px;text-align:center;top:274.32px;font-size:5.2px;color:#000;font-weight:400;">Att. bias (dB)</span>
<div style="left:260px;top:272px;width:29px;height:8.5px;background:#D4D0C8;box-shadow:inset -1px -1px #404040,inset 1px 1px #fff,inset -2px -2px #808080;"></div>
<span style="left:174.5px;width:200px;text-align:center;top:274.32px;font-size:5.2px;color:#000;font-weight:400;">A1 (dB/s)</span>
<div style="left:290.5px;top:272px;width:35px;height:8.5px;background:#D4D0C8;box-shadow:inset -1px -1px #404040,inset 1px 1px #fff,inset -2px -2px #808080;"></div>
<span style="left:208.0px;width:200px;text-align:center;top:274.32px;font-size:5.2px;color:#000;font-weight:400;">A2 (dB/s^2)</span>
<div style="left:326.5px;top:272px;width:35.5px;height:8.5px;background:#D4D0C8;box-shadow:inset -1px -1px #404040,inset 1px 1px #fff,inset -2px -2px #808080;"></div>
<span style="left:244.25px;width:200px;text-align:center;top:274.32px;font-size:5.2px;color:#000;font-weight:400;">A3 (dB/s^3)</span>
<div style="left:363.5px;top:272px;width:35px;height:8.5px;background:#D4D0C8;box-shadow:inset -1px -1px #404040,inset 1px 1px #fff,inset -2px -2px #808080;"></div>
<span style="left:281.0px;width:200px;text-align:center;top:274.32px;font-size:5.2px;color:#000;font-weight:400;">A4 (dB/s^4)</span>
<div style="left:400px;top:272px;width:35.5px;height:8.5px;background:#D4D0C8;box-shadow:inset -1px -1px #404040,inset 1px 1px #fff,inset -2px -2px #808080;"></div>
<span style="left:317.75px;width:200px;text-align:center;top:274.32px;font-size:5.2px;color:#000;font-weight:400;">A5 (dB/s^5)</span>
<div style="left:436.5px;top:272px;width:41px;height:8.5px;background:#D4D0C8;box-shadow:inset -1px -1px #404040,inset 1px 1px #fff,inset -2px -2px #808080;"></div>
<span style="left:357.0px;width:200px;text-align:center;top:274.32px;font-size:5.2px;color:#000;font-weight:400;">Delay bias (ns)</span>
<div style="left:478.5px;top:272px;width:28px;height:8.5px;background:#D4D0C8;box-shadow:inset -1px -1px #404040,inset 1px 1px #fff,inset -2px -2px #808080;"></div>
<span style="left:392.5px;width:200px;text-align:center;top:274.32px;font-size:5.2px;color:#000;font-weight:400;">D1 (ns/s)</span>
<div style="left:508px;top:272px;width:34.5px;height:8.5px;background:#D4D0C8;box-shadow:inset -1px -1px #404040,inset 1px 1px #fff,inset -2px -2px #808080;"></div>
<span style="left:425.25px;width:200px;text-align:center;top:274.32px;font-size:5.2px;color:#000;font-weight:400;">D2 (ns/s^2)</span>
<div style="left:544px;top:272px;width:34.5px;height:8.5px;background:#D4D0C8;box-shadow:inset -1px -1px #404040,inset 1px 1px #fff,inset -2px -2px #808080;"></div>
<span style="left:461.25px;width:200px;text-align:center;top:274.32px;font-size:5.2px;color:#000;font-weight:400;">D3 (ns/s^3)</span>
<div style="left:580px;top:272px;width:34.5px;height:8.5px;background:#D4D0C8;box-shadow:inset -1px -1px #404040,inset 1px 1px #fff,inset -2px -2px #808080;"></div>
<span style="left:497.25px;width:200px;text-align:center;top:274.32px;font-size:5.2px;color:#000;font-weight:400;">D4 (ns/s^4)</span>
<div style="left:616px;top:272px;width:34.5px;height:8.5px;background:#D4D0C8;box-shadow:inset -1px -1px #404040,inset 1px 1px #fff,inset -2px -2px #808080;"></div>
<span style="left:533.25px;width:200px;text-align:center;top:274.32px;font-size:5.2px;color:#000;font-weight:400;">D5 (ns/s^5)</span>
<div style="left:652px;top:272px;width:28.5px;height:8.5px;background:#D4D0C8;box-shadow:inset -1px -1px #404040,inset 1px 1px #fff,inset -2px -2px #808080;"></div>
<span style="left:566.25px;width:200px;text-align:center;top:274.32px;font-size:5.2px;color:#000;font-weight:400;">Period (s)</span>
<div style="left:154px;top:281.0px;width:21.5px;height:8px;background:#D4D0C8;box-shadow:inset 1px 1px #808080,inset -1px -1px #fff,inset 2px 2px #404040;"></div>
<span style="left:64.75px;width:200px;text-align:center;top:283.22px;font-size:5.2px;color:#000;font-weight:400;">LOS</span>
<div style="left:176.5px;top:281.0px;width:17px;height:8px;background:#D4D0C8;box-shadow:inset 1px 1px #808080,inset -1px -1px #fff,inset 2px 2px #404040;"></div>
<span style="left:85.0px;width:200px;text-align:center;top:283.22px;font-size:5.2px;color:#000;font-weight:400;">none</span>
<div style="left:194.0px;top:281.0px;width:26.5px;height:8px;background:#D4D0C8;box-shadow:inset 1px 1px #808080,inset -1px -1px #fff,inset 2px 2px #404040;"></div>
<span style="left:195.5px;top:283.30px;font-size:5px;color:#000;font-weight:400;">Forced</span>
<div style="left:213.0px;top:282.5px;width:6px;height:5.5px;background:#fff;box-shadow:inset 1px 1px #404040"></div>
<div style="left:221.5px;top:281.0px;width:37px;height:8px;background:#D4D0C8;box-shadow:inset 1px 1px #808080,inset -1px -1px #fff,inset 2px 2px #404040;"></div>
<span style="left:140.0px;width:200px;text-align:center;top:283.22px;font-size:5.2px;color:#000;font-weight:400;">0</span>
<div style="left:260px;top:281.0px;width:29px;height:8px;background:#D4D0C8;box-shadow:inset 1px 1px #808080,inset -1px -1px #fff,inset 2px 2px #404040;"></div>
<span style="left:174.5px;width:200px;text-align:center;top:283.22px;font-size:5.2px;color:#000;font-weight:400;">0</span>
<div style="left:290.5px;top:281.0px;width:35px;height:8px;background:#D4D0C8;box-shadow:inset 1px 1px #808080,inset -1px -1px #fff,inset 2px 2px #404040;"></div>
<span style="left:208.0px;width:200px;text-align:center;top:283.22px;font-size:5.2px;color:#000;font-weight:400;">0</span>
<div style="left:326.5px;top:281.0px;width:35.5px;height:8px;background:#D4D0C8;box-shadow:inset 1px 1px #808080,inset -1px -1px #fff,inset 2px 2px #404040;"></div>
<span style="left:244.25px;width:200px;text-align:center;top:283.22px;font-size:5.2px;color:#000;font-weight:400;">0</span>
<div style="left:363.5px;top:281.0px;width:35px;height:8px;background:#D4D0C8;box-shadow:inset 1px 1px #808080,inset -1px -1px #fff,inset 2px 2px #404040;"></div>
<span style="left:281.0px;width:200px;text-align:center;top:283.22px;font-size:5.2px;color:#000;font-weight:400;">0</span>
<div style="left:400px;top:281.0px;width:35.5px;height:8px;background:#D4D0C8;box-shadow:inset 1px 1px #808080,inset -1px -1px #fff,inset 2px 2px #404040;"></div>
<span style="left:317.75px;width:200px;text-align:center;top:283.22px;font-size:5.2px;color:#000;font-weight:400;">0</span>
<div style="left:436.5px;top:281.0px;width:41px;height:8px;background:#D4D0C8;box-shadow:inset 1px 1px #808080,inset -1px -1px #fff,inset 2px 2px #404040;"></div>
<span style="left:357.0px;width:200px;text-align:center;top:283.22px;font-size:5.2px;color:#000;font-weight:400;">0</span>
<div style="left:478.5px;top:281.0px;width:28px;height:8px;background:#D4D0C8;box-shadow:inset 1px 1px #808080,inset -1px -1px #fff,inset 2px 2px #404040;"></div>
<span style="left:392.5px;width:200px;text-align:center;top:283.22px;font-size:5.2px;color:#000;font-weight:400;">0</span>
<div style="left:508px;top:281.0px;width:34.5px;height:8px;background:#D4D0C8;box-shadow:inset 1px 1px #808080,inset -1px -1px #fff,inset 2px 2px #404040;"></div>
<span style="left:425.25px;width:200px;text-align:center;top:283.22px;font-size:5.2px;color:#000;font-weight:400;">0</span>
<div style="left:544px;top:281.0px;width:34.5px;height:8px;background:#D4D0C8;box-shadow:inset 1px 1px #808080,inset -1px -1px #fff,inset 2px 2px #404040;"></div>
<span style="left:461.25px;width:200px;text-align:center;top:283.22px;font-size:5.2px;color:#000;font-weight:400;">0</span>
<div style="left:580px;top:281.0px;width:34.5px;height:8px;background:#D4D0C8;box-shadow:inset 1px 1px #808080,inset -1px -1px #fff,inset 2px 2px #404040;"></div>
<span style="left:497.25px;width:200px;text-align:center;top:283.22px;font-size:5.2px;color:#000;font-weight:400;">0</span>
<div style="left:616px;top:281.0px;width:34.5px;height:8px;background:#D4D0C8;box-shadow:inset 1px 1px #808080,inset -1px -1px #fff,inset 2px 2px #404040;"></div>
<span style="left:533.25px;width:200px;text-align:center;top:283.22px;font-size:5.2px;color:#000;font-weight:400;">0</span>
<div style="left:652px;top:281.0px;width:28.5px;height:8px;background:#D4D0C8;box-shadow:inset 1px 1px #808080,inset -1px -1px #fff,inset 2px 2px #404040;"></div>
<span style="left:566.25px;width:200px;text-align:center;top:283.22px;font-size:5.2px;color:#000;font-weight:400;">0</span>
<div style="left:154px;top:289.3px;width:21.5px;height:8px;background:#D4D0C8;box-shadow:inset 1px 1px #808080,inset -1px -1px #fff,inset 2px 2px #404040;"></div>
<span style="left:64.75px;width:200px;text-align:center;top:291.52px;font-size:5.2px;color:#000;font-weight:400;">1</span>
<div style="left:176.5px;top:289.3px;width:17px;height:8px;background:#D4D0C8;box-shadow:inset 1px 1px #808080,inset -1px -1px #fff,inset 2px 2px #404040;"></div>
<span style="left:85.0px;width:200px;text-align:center;top:291.52px;font-size:5.2px;color:#000;font-weight:400;">none</span>
<div style="left:194.0px;top:289.3px;width:26.5px;height:8px;background:#D4D0C8;box-shadow:inset 1px 1px #808080,inset -1px -1px #fff,inset 2px 2px #404040;"></div>
<span style="left:195.5px;top:291.60px;font-size:5px;color:#000;font-weight:400;">Forced</span>
<div style="left:213.0px;top:290.8px;width:6px;height:5.5px;background:#fff;box-shadow:inset 1px 1px #404040"></div>
<div style="left:221.5px;top:289.3px;width:37px;height:8px;background:#fff;box-shadow:inset 1px 1px #808080,inset -1px -1px #fff,inset 2px 2px #404040;"></div>
<span style="left:140.0px;width:200px;text-align:center;top:291.52px;font-size:5.2px;color:#000;font-weight:400;">5</span>
<div style="left:260px;top:289.3px;width:29px;height:8px;background:#fff;box-shadow:inset 1px 1px #808080,inset -1px -1px #fff,inset 2px 2px #404040;"></div>
<span style="left:174.5px;width:200px;text-align:center;top:291.52px;font-size:5.2px;color:#000;font-weight:400;">0</span>
<div style="left:290.5px;top:289.3px;width:35px;height:8px;background:#fff;box-shadow:inset 1px 1px #808080,inset -1px -1px #fff,inset 2px 2px #404040;"></div>
<span style="left:208.0px;width:200px;text-align:center;top:291.52px;font-size:5.2px;color:#000;font-weight:400;">0</span>
<div style="left:326.5px;top:289.3px;width:35.5px;height:8px;background:#fff;box-shadow:inset 1px 1px #808080,inset -1px -1px #fff,inset 2px 2px #404040;"></div>
<span style="left:244.25px;width:200px;text-align:center;top:291.52px;font-size:5.2px;color:#000;font-weight:400;">0</span>
<div style="left:363.5px;top:289.3px;width:35px;height:8px;background:#fff;box-shadow:inset 1px 1px #808080,inset -1px -1px #fff,inset 2px 2px #404040;"></div>
<span style="left:281.0px;width:200px;text-align:center;top:291.52px;font-size:5.2px;color:#000;font-weight:400;">0</span>
<div style="left:400px;top:289.3px;width:35.5px;height:8px;background:#fff;box-shadow:inset 1px 1px #808080,inset -1px -1px #fff,inset 2px 2px #404040;"></div>
<span style="left:317.75px;width:200px;text-align:center;top:291.52px;font-size:5.2px;color:#000;font-weight:400;">0</span>
<div style="left:436.5px;top:289.3px;width:41px;height:8px;background:#fff;box-shadow:inset 1px 1px #808080,inset -1px -1px #fff,inset 2px 2px #404040;"></div>
<span style="left:357.0px;width:200px;text-align:center;top:291.52px;font-size:5.2px;color:#000;font-weight:400;">80</span>
<div style="left:478.5px;top:289.3px;width:28px;height:8px;background:#fff;box-shadow:inset 1px 1px #808080,inset -1px -1px #fff,inset 2px 2px #404040;"></div>
<span style="left:392.5px;width:200px;text-align:center;top:291.52px;font-size:5.2px;color:#000;font-weight:400;">0.002</span>
<div style="left:508px;top:289.3px;width:34.5px;height:8px;background:#fff;box-shadow:inset 1px 1px #808080,inset -1px -1px #fff,inset 2px 2px #404040;"></div>
<span style="left:425.25px;width:200px;text-align:center;top:291.52px;font-size:5.2px;color:#000;font-weight:400;">0</span>
<div style="left:544px;top:289.3px;width:34.5px;height:8px;background:#fff;box-shadow:inset 1px 1px #808080,inset -1px -1px #fff,inset 2px 2px #404040;"></div>
<span style="left:461.25px;width:200px;text-align:center;top:291.52px;font-size:5.2px;color:#000;font-weight:400;">0</span>
<div style="left:580px;top:289.3px;width:34.5px;height:8px;background:#fff;box-shadow:inset 1px 1px #808080,inset -1px -1px #fff,inset 2px 2px #404040;"></div>
<span style="left:497.25px;width:200px;text-align:center;top:291.52px;font-size:5.2px;color:#000;font-weight:400;">0</span>
<div style="left:616px;top:289.3px;width:34.5px;height:8px;background:#fff;box-shadow:inset 1px 1px #808080,inset -1px -1px #fff,inset 2px 2px #404040;"></div>
<span style="left:533.25px;width:200px;text-align:center;top:291.52px;font-size:5.2px;color:#000;font-weight:400;">0</span>
<div style="left:652px;top:289.3px;width:28.5px;height:8px;background:#fff;box-shadow:inset 1px 1px #808080,inset -1px -1px #fff,inset 2px 2px #404040;"></div>
<span style="left:566.25px;width:200px;text-align:center;top:291.52px;font-size:5.2px;color:#000;font-weight:400;">32000</span>
<div style="left:566px;top:439px;width:36px;height:11.5px;background:#D4D0C8;box-shadow:inset -1px -1px #404040,inset 1px 1px #fff,inset -2px -2px #808080;box-shadow:inset -1px -1px #404040,inset 1px 1px #fff,inset -2px -2px #808080,0 0 0 0.8px #000"></div>
<span style="left:484px;width:200px;text-align:center;top:442.82px;font-size:5.2px;color:#000;font-weight:400;">OK</span>
<div style="left:606px;top:439px;width:36px;height:11.5px;background:#D4D0C8;box-shadow:inset -1px -1px #404040,inset 1px 1px #fff,inset -2px -2px #808080;box-shadow:inset -1px -1px #404040,inset 1px 1px #fff,inset -2px -2px #808080"></div>
<span style="left:524px;width:200px;text-align:center;top:442.82px;font-size:5.2px;color:#000;font-weight:400;">Help</span>
<div style="left:645px;top:439px;width:36px;height:11.5px;background:#D4D0C8;box-shadow:inset -1px -1px #404040,inset 1px 1px #fff,inset -2px -2px #808080;box-shadow:inset -1px -1px #404040,inset 1px 1px #fff,inset -2px -2px #808080"></div>
<span style="left:563px;width:200px;text-align:center;top:442.82px;font-size:5.2px;color:#000;font-weight:400;">Cancel</span>
</body></html>
